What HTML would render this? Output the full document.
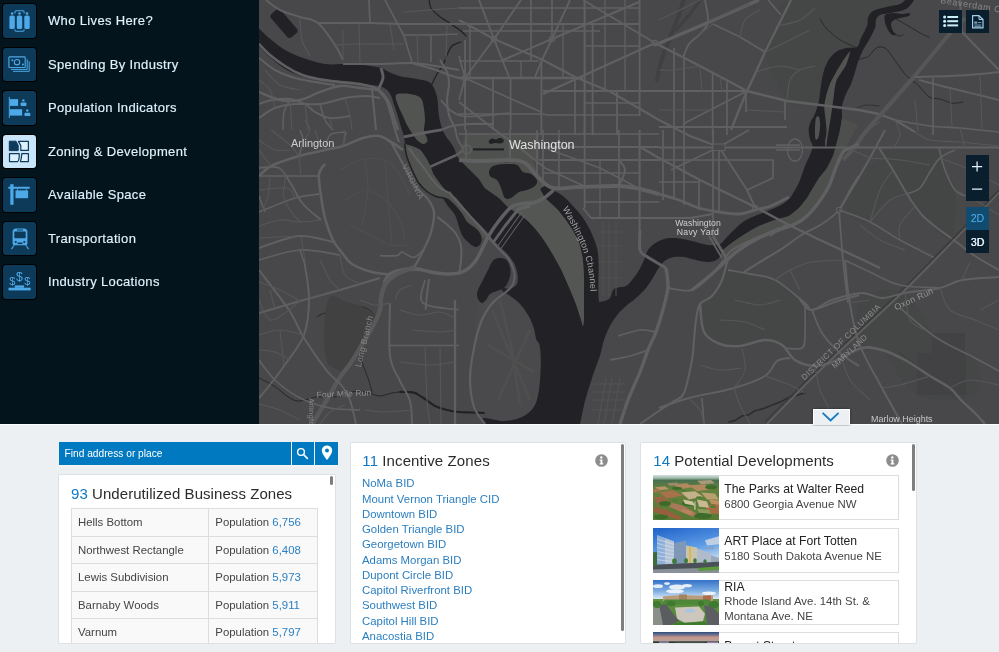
<!DOCTYPE html>
<html>
<head>
<meta charset="utf-8">
<title>Zoning &amp; Development</title>
<style>
html,body{margin:0;padding:0;}
body{width:999px;height:652px;overflow:hidden;background:#ecf0f3;font-family:"Liberation Sans",sans-serif;position:relative;}
#side{will-change:transform;position:absolute;left:0;top:0;width:259px;height:424px;background:#03141d;}
.mi{position:absolute;left:0;width:259px;height:33.5px;}
.mi .ib{position:absolute;left:3px;top:0;width:33px;height:33.5px;background:#0c3a58;border-radius:3px;box-shadow:0 0 0 1px #000;}
.mi.sel .ib{background:#c9e5fa;}
.mi .ib svg{position:absolute;left:0;top:0;}
.mi .lb{position:absolute;left:48px;top:0;height:34px;line-height:34px;font-size:13px;color:#e1f2fc;-webkit-text-stroke:0.15px #e1f2fc;letter-spacing:0.35px;white-space:nowrap;}
#map{position:absolute;left:259px;top:0;width:740px;height:424px;background:#48484a;overflow:hidden;}
#map svg.m{position:absolute;left:0;top:0;will-change:transform;}
.mb{position:absolute;background:#0a1f2d;will-change:transform;}
#bottom{will-change:transform;position:absolute;left:0;top:424px;width:999px;height:228px;background:#ecf0f3;box-shadow:inset 0 1px 0 #fff;}

#search{position:absolute;left:58.5px;top:18px;width:279.3px;height:22.8px;background:#0079c1;}
#search .t{position:absolute;left:6px;top:0;line-height:23px;font-size:10.2px;color:#fff;white-space:nowrap;}
#search .d{position:absolute;top:0;width:1px;height:25px;background:#ecf0f3;z-index:2;}
#search:after{content:"";position:absolute;left:0;top:22.8px;width:100%;height:2.2px;background:#f3f3f1;}
.h{position:absolute;font-size:15px;color:#2b2b2b;white-space:nowrap;line-height:18px;}
.h b{font-weight:normal;color:#0d79c4;}
table.z{position:absolute;left:12px;top:33px;border-collapse:collapse;font-size:11.4px;color:#444;}
table.z td{border:1px solid #ddd;background:#f9f9f9;height:27.5px;padding:0 0 0 6px;box-sizing:border-box;white-space:nowrap;}
table.z td b{font-weight:normal;color:#2b80c4;}
.sb{position:absolute;background:#7e7e7e;border-radius:1.5px;}
.lst{position:absolute;left:11px;top:33.4px;font-size:11.4px;line-height:15.23px;color:#2b7fc0;white-space:nowrap;}
.info{position:absolute;width:13px;height:13px;}
.dv{position:absolute;left:12px;width:245.8px;height:45px;border:1px solid #ddd;box-sizing:border-box;background:#fff;}
.dv .im{position:absolute;left:-1px;top:-1px;width:65.6px;height:45px;overflow:hidden;}
.dv .tt{position:absolute;left:70.3px;font-size:12.2px;color:#222;white-space:nowrap;line-height:15px;}
.dv .st{position:absolute;left:70.3px;font-size:11.4px;color:#444;white-space:nowrap;line-height:15px;}
.card{position:absolute;background:#fff;border:1px solid #dde1e4;border-radius:2px;box-sizing:border-box;overflow:hidden;}
</style>
</head>
<body>
<div id="side">
  <div class="mi" style="top:4px"><div class="ib"><svg width="33" height="34" viewBox="0 0 33 34"><g fill="#4ea9e8">
<circle cx="9.1" cy="9.5" r="1.3"/><rect x="6.4" y="11.5" width="5.4" height="13.6" rx="1.6"/>
<circle cx="16.5" cy="9.5" r="1.3"/><rect x="13.8" y="11.5" width="5.4" height="13.6" rx="1.6"/>
<circle cx="24" cy="9.5" r="1.3"/><rect x="21.3" y="11.5" width="5.4" height="13.6" rx="1.6"/></g>
<path d="M11.9 9.6 V8 Q11.9 6.8 13.1 6.8 H19.9 Q21.1 6.8 21.1 8 V9.6 M11.9 25.4 V26 Q11.9 27.2 13.1 27.2 H19.9 Q21.1 27.2 21.1 26 V25.4" fill="none" stroke="#4ea9e8" stroke-width="1.1"/></svg></div><div class="lb">Who Lives Here?</div></div>
  <div class="mi" style="top:47.6px"><div class="ib"><svg width="33" height="34" viewBox="0 0 33 34"><g fill="none" stroke="#4ea9e8" stroke-width="1.1">
<rect x="5.9" y="8.9" width="16.3" height="10.6" rx="0.8"/><circle cx="14" cy="14.2" r="2.7"/>
<path d="M8 21.4 H24.2 V11.2 M10 23.3 H26.2 V13.2" stroke-width="1"/></g>
<circle cx="9.3" cy="12.3" r="1" fill="#4ea9e8"/><circle cx="19.9" cy="16.6" r="1" fill="#4ea9e8"/></svg></div><div class="lb">Spending By Industry</div></div>
  <div class="mi" style="top:91px"><div class="ib"><svg width="33" height="34" viewBox="0 0 33 34"><g fill="#4ea9e8">
<rect x="5.8" y="5.9" width="1" height="21"/><rect x="6.8" y="8.1" width="8.3" height="6.8"/><rect x="6.8" y="18.2" width="12.4" height="6.4"/>
<circle cx="20.4" cy="9.4" r="1.2"/><rect x="17.6" y="11.6" width="5.8" height="3.3" rx="0.6"/>
<circle cx="24.3" cy="19.5" r="1.2"/><rect x="21.5" y="21.8" width="5.8" height="3.3" rx="0.6"/></g></svg></div><div class="lb">Population Indicators</div></div>
  <div class="mi sel" style="top:134.6px"><div class="ib"><svg width="33" height="34" viewBox="0 0 33 34">
<path d="M6.3 6.2 H13 L15.2 10.6 V15.6 H6.3 Z" fill="#0e3a5c" stroke="#0e3a5c" stroke-width="1"/>
<path d="M15.4 6.4 H25.4 V15.4 H17.8 V10.6 Z" fill="#dcf0fd" stroke="#0e3a5c" stroke-width="1.2" stroke-linejoin="round"/>
<path d="M6.5 18.6 H16.2 V22 Q16 25.4 14.6 26.6 H6.5 Z" fill="#dcf0fd" stroke="#0e3a5c" stroke-width="1.2" stroke-linejoin="round"/>
<path d="M18.8 18.6 H25.4 V26.6 H17.4 Q18.6 23 18.8 18.6 Z" fill="#dcf0fd" stroke="#0e3a5c" stroke-width="1.2" stroke-linejoin="round"/></svg></div><div class="lb">Zoning &amp; Development</div></div>
  <div class="mi" style="top:178px"><div class="ib"><svg width="33" height="34" viewBox="0 0 33 34"><g fill="#4ea9e8">
<rect x="7.3" y="6.2" width="3.2" height="20.6"/><path d="M5.4 8.8 H26 L27.4 9.7 L26 10.7 H5.4 Z"/>
<rect x="12.5" y="12.4" width="12.6" height="7.8"/><rect x="14" y="10.7" width="0.9" height="1.8"/><rect x="22.7" y="10.7" width="0.9" height="1.8"/></g></svg></div><div class="lb">Available Space</div></div>
  <div class="mi" style="top:221.5px"><div class="ib"><svg width="33" height="34" viewBox="0 0 33 34">
<path d="M9.6 10 Q9.6 6.5 13 6.5 H21 Q24.4 6.5 24.4 10 V21.5 Q24.4 23.2 22.7 23.2 H11.3 Q9.6 23.2 9.6 21.5 Z" fill="#4ea9e8"/>
<rect x="11.3" y="9.6" width="11.4" height="6.6" rx="0.8" fill="#0d3a58"/><rect x="14" y="7.5" width="6" height="1" fill="#0d3a58"/>
<circle cx="12.7" cy="20" r="1.1" fill="#0d3a58"/><circle cx="21.3" cy="20" r="1.1" fill="#0d3a58"/><rect x="14.5" y="20.5" width="5" height="1.6" fill="#0d3a58"/>
<path d="M11.2 23.2 L8.4 27.1 M22.8 23.2 L25.6 27.1" stroke="#4ea9e8" stroke-width="1.1" fill="none"/></svg></div><div class="lb">Transportation</div></div>
  <div class="mi" style="top:265px"><div class="ib"><svg width="33" height="34" viewBox="0 0 33 34"><g fill="#4ea9e8" font-family="Liberation Sans, sans-serif" text-anchor="middle">
<text x="9.2" y="19.9" font-size="11">$</text><text x="16.4" y="16.3" font-size="12.3">$</text><text x="24.4" y="19.9" font-size="11">$</text>
<rect x="5.5" y="22.7" width="22.1" height="2.7"/><rect x="11.8" y="20.4" width="9.3" height="2.4"/></g></svg></div><div class="lb">Industry Locations</div></div>
</div>
<div id="map">
  <svg class="m" width="740" height="424" viewBox="259 0 740 424">
  <path d="M478.0 300.0 C480.7 291.0 485.8 295.5 490.0 294.0 C494.2 292.5 498.0 289.3 503.0 291.0 C508.0 292.7 515.2 299.5 520.0 304.0 C524.8 308.5 528.7 311.2 532.0 318.0 C535.3 324.8 538.5 334.7 540.0 345.0 C541.5 355.3 541.8 369.8 541.0 380.0 C540.2 390.2 538.2 399.8 535.0 406.0 C531.8 412.2 527.2 414.5 522.0 417.0 C516.8 419.5 510.3 421.0 504.0 421.0 C497.7 421.0 489.0 419.3 484.0 417.0 C479.0 414.7 476.3 413.5 474.0 407.0 C471.7 400.5 470.0 387.8 470.0 378.0 C470.0 368.2 472.7 361.0 474.0 348.0 C475.3 335.0 475.3 309.0 478.0 300.0Z" fill="#4a4a4c"/>
<path d="M791.0 0.0 C811.3 -4.3 886.3 -1.8 900.0 0.0 C913.7 1.8 878.5 6.7 873.0 11.0 C867.5 15.3 869.7 20.0 867.0 26.0 C864.3 32.0 862.2 42.7 857.0 47.0 C851.8 51.3 841.7 47.5 836.0 52.0 C830.3 56.5 825.8 66.0 823.0 74.0 C820.2 82.0 822.8 95.0 819.0 100.0 C815.2 105.0 805.3 103.8 800.0 104.0 C794.7 104.2 792.8 109.7 787.0 101.0 C781.2 92.3 766.5 64.5 765.0 52.0 C763.5 39.5 773.7 34.7 778.0 26.0 C782.3 17.3 770.7 4.3 791.0 0.0Z" fill="#454746"/>
<path d="M885.0 150.0 C892.7 146.7 929.0 146.7 939.0 150.0 C949.0 153.3 942.3 163.3 945.0 170.0 C947.7 176.7 954.0 178.7 955.0 190.0 C956.0 201.3 956.3 233.7 951.0 238.0 C945.7 242.3 930.3 223.3 923.0 216.0 C915.7 208.7 912.0 201.7 907.0 194.0 C902.0 186.3 896.7 177.3 893.0 170.0 C889.3 162.7 877.3 153.3 885.0 150.0Z" fill="#444645"/>
<path d="M859.0 176.0 C864.8 169.3 874.3 161.0 880.0 160.0 C885.7 159.0 888.5 164.3 893.0 170.0 C897.5 175.7 907.5 189.0 907.0 194.0 C906.5 199.0 896.2 195.3 890.0 200.0 C883.8 204.7 876.7 219.5 870.0 222.0 C863.3 224.5 854.2 218.7 850.0 215.0 C845.8 211.3 843.5 206.5 845.0 200.0 C846.5 193.5 853.2 182.7 859.0 176.0Z" fill="#454746"/>
<path d="M700.0 304.0 C698.7 310.0 700.7 325.3 704.0 332.0 C707.3 338.7 713.7 341.3 720.0 344.0 C726.3 346.7 734.5 348.7 742.0 348.0 C749.5 347.3 758.3 340.5 765.0 340.0 C771.7 339.5 778.7 343.7 782.0 345.0 C785.3 346.3 781.7 347.5 785.0 348.0 C788.3 348.5 798.7 350.2 802.0 348.0 C805.3 345.8 804.5 342.5 805.0 335.0 C805.5 327.5 810.0 312.2 805.0 303.0 C800.0 293.8 784.2 284.8 775.0 280.0 C765.8 275.2 757.8 275.7 750.0 274.0 C742.2 272.3 734.3 266.3 728.0 270.0 C721.7 273.7 716.7 290.3 712.0 296.0 C707.3 301.7 701.3 298.0 700.0 304.0Z" fill="#454746"/>
<path d="M860.0 300.0 C867.2 290.8 892.2 286.7 905.0 293.0 C917.8 299.3 925.3 327.2 937.0 338.0 C948.7 348.8 968.7 348.5 975.0 358.0 C981.3 367.5 984.7 388.8 975.0 395.0 C965.3 401.2 932.5 402.5 917.0 395.0 C901.5 387.5 891.2 357.8 882.0 350.0 C872.8 342.2 865.7 356.3 862.0 348.0 C858.3 339.7 852.8 309.2 860.0 300.0Z" fill="#454646"/>
<path d="M255.0 26.0 C257.3 25.5 264.0 34.0 269.0 38.0 C274.0 42.0 279.3 46.7 285.0 50.0 C290.7 53.3 296.3 55.7 303.0 58.0 C309.7 60.3 318.3 63.0 325.0 64.0 C331.7 65.0 336.7 63.8 343.0 64.0 C349.3 64.2 356.7 64.3 363.0 65.0 C369.3 65.7 377.0 67.0 381.0 68.0 C385.0 69.0 384.0 69.7 387.0 71.0 C390.0 72.3 394.0 74.7 399.0 76.0 C404.0 77.3 412.0 78.0 417.0 79.0 C422.0 80.0 426.2 80.5 429.0 82.0 C431.8 83.5 432.8 85.8 434.0 88.0 C435.2 90.2 435.9 92.8 436.5 95.0 C437.1 97.2 437.4 98.2 437.7 101.0 C438.0 103.8 438.1 108.6 438.5 112.0 C438.9 115.4 439.3 118.7 440.0 121.6 C440.7 124.5 441.6 127.2 442.5 129.6 C443.4 132.0 444.4 133.8 445.7 136.0 C447.0 138.2 449.0 140.3 450.5 142.5 C452.0 144.7 453.4 146.8 454.5 149.0 C455.6 151.2 455.5 153.6 457.0 156.0 C458.5 158.4 460.9 160.8 463.3 163.3 C465.7 165.9 468.6 168.6 471.3 171.3 C474.0 174.0 477.0 176.5 479.3 179.3 C481.6 182.1 481.7 184.9 485.0 188.0 C488.3 191.1 495.0 194.7 499.0 198.0 C503.0 201.3 505.7 205.3 509.0 208.0 C512.3 210.7 515.8 211.8 519.0 214.0 C522.2 216.2 525.1 218.3 528.0 221.0 C530.9 223.7 533.6 226.8 536.3 230.0 C538.9 233.2 541.2 236.1 543.9 240.0 C546.6 243.9 549.5 248.8 552.3 253.6 C555.1 258.4 558.0 263.2 560.8 268.8 C563.6 274.4 566.7 281.5 569.2 287.4 C571.7 293.3 574.0 298.6 576.0 304.0 C578.0 309.4 579.8 315.8 581.0 319.5 C582.2 323.2 582.5 326.2 583.0 326.0 C583.5 325.8 583.8 322.8 584.0 318.0 C584.2 313.2 584.0 304.3 584.0 297.5 C584.0 290.7 584.2 283.5 584.0 277.0 C583.8 270.5 583.5 264.3 582.7 258.7 C581.9 253.1 581.0 248.3 579.3 243.5 C577.6 238.7 575.0 234.1 572.6 230.0 C570.2 225.9 567.6 222.5 565.0 219.0 C562.4 215.5 560.3 212.5 557.0 209.0 C553.7 205.5 547.8 201.3 545.0 198.0 C542.2 194.7 539.8 191.2 540.0 189.0 C540.2 186.8 543.8 184.8 546.0 185.0 C548.2 185.2 550.2 188.2 553.0 190.0 C555.8 191.8 559.7 193.3 563.0 196.0 C566.3 198.7 569.7 202.3 573.0 206.0 C576.3 209.7 580.0 213.7 583.0 218.0 C586.0 222.3 588.7 227.0 591.0 232.0 C593.3 237.0 595.8 243.0 597.0 248.0 C598.2 253.0 598.2 253.7 598.5 262.0 C598.8 270.3 598.0 291.4 598.6 298.0 C599.2 304.6 600.1 301.5 602.0 301.5 C603.9 301.5 608.0 300.1 610.0 298.0 C612.0 295.9 611.3 291.0 614.0 289.0 C616.7 287.0 623.0 287.5 626.0 286.0 C629.0 284.5 630.0 282.3 632.0 280.0 C634.0 277.7 636.0 275.3 638.0 272.0 C640.0 268.7 642.3 263.7 644.0 260.0 C645.7 256.3 646.3 252.7 648.0 250.0 C649.7 247.3 651.3 245.8 654.0 244.0 C656.7 242.2 660.3 240.0 664.0 239.0 C667.7 238.0 671.3 237.7 676.0 238.0 C680.7 238.3 686.7 239.8 692.0 241.0 C697.3 242.2 703.3 244.5 708.0 245.0 C712.7 245.5 717.0 245.2 720.0 244.0 C723.0 242.8 723.3 240.7 726.0 238.0 C728.7 235.3 732.7 231.0 736.0 228.0 C739.3 225.0 742.0 222.3 746.0 220.0 C750.0 217.7 754.5 216.3 760.0 214.0 C765.5 211.7 774.2 208.5 779.0 206.0 C783.8 203.5 786.3 201.7 789.0 199.0 C791.7 196.3 793.2 193.0 795.0 190.0 C796.8 187.0 797.9 185.1 799.6 181.0 C801.3 176.9 803.3 170.0 805.0 165.7 C806.7 161.4 808.7 158.3 810.0 155.0 C811.3 151.7 812.6 148.6 812.6 146.0 C812.6 143.4 810.6 142.4 810.0 139.6 C809.4 136.8 808.5 132.1 808.7 129.0 C808.9 125.9 810.1 123.2 811.0 121.0 C811.9 118.8 813.0 118.2 814.0 116.0 C815.0 113.8 816.2 110.6 817.0 108.0 C817.8 105.4 818.4 103.4 819.0 100.4 C819.6 97.4 819.7 94.4 820.4 90.0 C821.1 85.6 821.7 78.8 823.0 74.0 C824.3 69.2 825.8 64.7 828.0 61.0 C830.2 57.3 833.0 54.2 836.0 52.0 C839.0 49.8 842.5 48.8 846.0 48.0 C849.5 47.2 854.5 48.7 857.0 47.0 C859.5 45.3 859.3 41.5 861.0 38.0 C862.7 34.5 865.8 29.3 867.0 26.0 C868.2 22.7 867.0 20.5 868.0 18.0 C869.0 15.5 870.0 12.8 873.0 11.0 C876.0 9.2 881.5 8.2 886.0 7.0 C890.5 5.8 896.3 5.5 900.0 4.0 C903.7 2.5 905.5 -1.0 908.0 -2.0 C910.5 -3.0 915.3 -3.8 915.0 -2.0 C914.7 -0.2 910.2 6.5 906.0 9.0 C901.8 11.5 894.3 12.0 890.0 13.0 C885.7 14.0 882.3 13.8 880.0 15.0 C877.7 16.2 876.8 17.8 876.0 20.0 C875.2 22.2 876.2 24.7 875.0 28.0 C873.8 31.3 871.0 36.3 869.0 40.0 C867.0 43.7 864.8 46.3 863.0 50.0 C861.2 53.7 859.3 58.3 858.0 62.0 C856.7 65.7 856.2 68.3 855.0 72.0 C853.8 75.7 852.5 80.3 851.0 84.0 C849.5 87.7 847.5 90.3 846.0 94.0 C844.5 97.7 842.7 102.0 842.0 106.0 C841.3 110.0 842.3 114.0 842.0 118.0 C841.7 122.0 840.8 126.0 840.0 130.0 C839.2 134.0 838.2 137.7 837.0 142.0 C835.8 146.3 834.7 151.7 833.0 156.0 C831.3 160.3 829.3 164.3 827.0 168.0 C824.7 171.7 821.3 174.7 819.0 178.0 C816.7 181.3 815.0 184.7 813.0 188.0 C811.0 191.3 809.3 194.7 807.0 198.0 C804.7 201.3 802.0 205.0 799.0 208.0 C796.0 211.0 793.0 214.0 789.0 216.0 C785.0 218.0 780.0 218.3 775.0 220.0 C770.0 221.7 764.0 223.7 759.0 226.0 C754.0 228.3 749.3 231.3 745.0 234.0 C740.7 236.7 736.7 239.3 733.0 242.0 C729.3 244.7 725.5 247.2 723.0 250.0 C720.5 252.8 720.5 257.0 718.0 259.0 C715.5 261.0 711.7 261.8 708.0 262.0 C704.3 262.2 700.0 260.8 696.0 260.0 C692.0 259.2 687.7 257.5 684.0 257.0 C680.3 256.5 677.0 256.5 674.0 257.0 C671.0 257.5 668.3 258.5 666.0 260.0 C663.7 261.5 662.0 263.3 660.0 266.0 C658.0 268.7 656.3 272.3 654.0 276.0 C651.7 279.7 649.0 284.3 646.0 288.0 C643.0 291.7 639.3 295.0 636.0 298.0 C632.7 301.0 629.0 303.3 626.0 306.0 C623.0 308.7 620.7 310.7 618.0 314.0 C615.3 317.3 612.3 321.7 610.0 326.0 C607.7 330.3 605.7 335.1 604.0 340.0 C602.3 344.9 602.0 349.3 600.0 355.6 C598.0 361.9 594.5 370.4 592.0 378.0 C589.5 385.6 587.0 393.3 585.0 401.0 C583.0 408.7 581.2 419.2 580.0 424.0 C578.8 428.8 594.7 429.0 578.0 430.0 C561.3 431.0 495.8 431.0 480.0 430.0 C464.2 429.0 482.3 426.0 483.0 424.0 C483.7 422.0 480.5 418.5 484.0 418.0 C487.5 417.5 497.7 421.2 504.0 421.0 C510.3 420.8 516.9 419.5 522.0 417.0 C527.1 414.5 531.6 411.2 534.5 406.0 C537.4 400.8 538.5 393.7 539.5 386.0 C540.5 378.3 540.8 366.8 540.8 360.0 C540.8 353.2 540.2 348.4 539.5 345.0 C538.8 341.6 537.2 342.3 536.3 339.5 C535.3 336.7 535.1 331.9 533.8 328.0 C532.5 324.1 531.0 320.0 528.7 316.0 C526.4 312.0 523.1 307.4 520.0 304.0 C516.9 300.6 512.8 297.9 510.0 295.8 C507.2 293.7 504.2 292.8 503.0 291.5 C501.8 290.2 501.7 288.8 503.0 288.3 C504.3 287.8 508.7 289.2 511.0 288.5 C513.3 287.8 515.8 286.1 516.9 284.0 C518.0 281.9 518.0 278.7 517.7 275.6 C517.4 272.5 516.2 268.0 515.2 265.4 C514.2 262.8 513.3 261.9 512.0 260.0 C510.7 258.1 509.2 256.1 507.3 254.0 C505.4 251.9 503.2 250.0 500.8 247.6 C498.4 245.2 495.2 242.3 492.8 239.6 C490.4 236.9 488.5 234.0 486.4 231.6 C484.3 229.2 482.4 227.4 480.0 225.0 C477.6 222.6 474.7 219.9 472.0 217.0 C469.3 214.1 466.7 210.8 464.0 207.6 C461.3 204.4 458.3 200.2 456.0 198.0 C453.7 195.8 451.5 195.3 450.0 194.2 C448.5 193.1 448.3 192.6 447.0 191.4 C445.7 190.2 443.9 188.6 442.4 186.8 C440.9 185.0 439.3 182.6 437.8 180.4 C436.3 178.2 434.4 176.2 433.2 173.9 C432.0 171.6 431.6 169.1 430.5 166.6 C429.4 164.1 428.5 162.0 426.8 159.2 C425.1 156.4 422.7 152.1 420.4 150.0 C418.1 147.9 415.5 147.5 413.0 146.5 C410.5 145.5 407.1 145.8 405.6 144.0 C404.1 142.2 404.8 138.9 404.0 136.0 C403.2 133.1 401.9 129.9 400.8 126.4 C399.7 122.9 398.7 118.7 397.6 115.2 C396.5 111.7 395.5 108.8 394.4 105.6 C393.3 102.4 392.5 98.7 391.2 96.0 C389.9 93.3 388.4 91.3 386.4 89.6 C384.4 87.9 382.9 86.9 379.0 86.0 C375.1 85.1 368.7 84.8 363.0 84.0 C357.3 83.2 351.3 81.7 345.0 81.0 C338.7 80.3 331.7 80.7 325.0 80.0 C318.3 79.3 311.3 78.7 305.0 77.0 C298.7 75.3 292.7 73.2 287.0 70.0 C281.3 66.8 276.3 62.8 271.0 58.0 C265.7 53.2 257.7 46.3 255.0 41.0 C252.3 35.7 252.7 26.5 255.0 26.0Z" fill="#222226"/>
<path d="M509.0 208.0 L519.0 214.0 L528.0 221.0 L536.3 230.0 L543.9 240.0 L552.3 253.6 L560.8 268.8 L569.2 287.4 L576.0 304.0 L581.0 319.5 L583.0 326.0 L584.0 318.0 L584.0 297.5 L584.0 277.0 L582.7 258.7 L579.3 243.5 L572.6 230.0 L565.0 219.0 L557.0 209.0 L545.0 198.0 L540.0 189.0 L530.0 195.0 L519.0 202.0Z" fill="#545654"/>
<path d="M457.0 156.0 L463.0 163.0 L471.0 171.0 L479.0 179.0 L485.0 188.0 L499.0 198.0 L509.0 208.0 L519.0 202.0 L543.0 198.0 L540.0 189.0 L546.0 185.0 L539.0 178.0 L533.0 160.0 L539.0 160.0 L539.0 134.0 L466.0 134.0 L462.0 146.0Z" fill="#4f514f"/>
<path d="M405.6 144.0 L413.0 146.5 L420.4 150.0 L426.8 159.2 L430.5 166.6 L433.2 173.9 L437.8 180.4 L442.4 186.8 L447.0 191.4 L450.0 194.2 L456.0 198.0 L464.0 207.6 L472.0 217.0 L480.0 225.0 L486.4 231.6 L492.8 239.6 L481.6 238.0 L477.6 230.0 L467.2 222.0 L462.4 214.0 L456.0 206.0 L448.0 198.8 L443.2 198.0 L436.0 196.0 L427.0 191.0 L418.4 182.5 L412.0 169.7 L406.4 155.0Z" fill="#505250"/>
<path d="M842.0 118.0 L840.0 130.0 L837.0 142.0 L833.0 156.0 L827.0 168.0 L819.0 178.0 L813.0 188.0 L807.0 198.0 L799.0 208.0 L789.0 216.0 L775.0 220.0 L759.0 226.0 L745.0 234.0 L733.0 242.0 L723.0 250.0 L727.0 260.0 L739.0 250.0 L759.0 238.0 L779.0 230.0 L795.0 224.0 L807.0 216.0 L819.0 202.0 L829.0 186.0 L835.0 170.0 L843.0 152.0 L850.0 140.0 L858.0 125.0Z" fill="#4d4f4d"/>
<path d="M850.0 52.0 C849.9 53.5 848.0 60.5 846.5 64.0 C845.0 67.5 842.8 70.0 841.0 73.0 C839.2 76.0 837.2 77.8 836.0 82.0 C834.8 86.2 834.3 92.3 833.5 98.0 C832.7 103.7 831.9 110.0 831.0 116.0 C830.1 122.0 828.8 128.8 828.0 134.0 C827.2 139.2 826.5 145.7 826.0 147.0 C825.5 148.3 824.9 144.6 825.0 142.0 C825.1 139.4 826.4 135.6 826.5 131.7 C826.6 127.8 825.9 122.7 825.5 118.7 C825.1 114.8 824.3 111.5 824.3 108.0 C824.3 104.5 824.8 101.7 825.7 97.8 C826.6 93.9 828.1 88.7 829.6 84.8 C831.1 80.9 832.9 77.9 834.8 74.4 C836.7 70.9 839.0 67.2 841.0 64.0 C843.0 60.8 845.5 57.0 847.0 55.0 C848.5 53.0 850.1 50.5 850.0 52.0Z" fill="#525452"/>
<path d="M816.0 118.0 C816.7 116.2 818.3 115.7 819.0 117.0 C819.7 118.3 820.1 122.7 820.0 126.0 C819.9 129.3 819.2 134.8 818.5 137.0 C817.8 139.2 816.1 140.5 815.5 139.0 C814.9 137.5 814.9 131.5 815.0 128.0 C815.1 124.5 815.3 119.8 816.0 118.0Z" fill="#525452"/>
<path d="M493.0 260.5 C495.0 258.5 497.7 258.0 500.0 258.0 C502.3 258.0 505.2 258.5 507.0 260.5 C508.8 262.5 510.2 266.8 510.5 270.0 C510.8 273.2 510.1 277.0 509.0 280.0 C507.9 283.0 506.0 286.2 504.0 288.0 C502.0 289.8 499.3 290.0 497.0 291.0 C494.7 292.0 491.8 292.5 490.0 294.0 C488.2 295.5 487.3 298.5 486.0 300.0 C484.7 301.5 483.2 303.0 482.0 303.0 C480.8 303.0 479.3 301.5 478.5 300.0 C477.7 298.5 477.0 295.8 477.0 294.0 C477.0 292.2 477.4 291.3 478.4 289.0 C479.4 286.7 481.4 283.2 483.0 280.0 C484.6 276.8 486.3 273.2 488.0 270.0 C489.7 266.8 491.0 262.5 493.0 260.5Z" fill="#222226"/>
<path d="M443.2 198.0 C443.2 196.8 445.9 197.5 448.0 198.8 C450.1 200.1 453.6 203.5 456.0 206.0 C458.4 208.5 460.5 211.3 462.4 214.0 C464.3 216.7 464.7 219.3 467.2 222.0 C469.7 224.7 475.2 227.3 477.6 230.0 C480.0 232.7 481.2 235.6 481.6 238.0 C482.0 240.4 480.9 243.0 480.0 244.5 C479.1 246.0 477.3 246.9 476.0 247.0 C474.7 247.1 474.0 246.8 472.0 245.3 C470.0 243.8 466.0 240.6 464.0 238.0 C462.0 235.4 461.1 232.7 460.0 230.0 C458.9 227.3 458.5 224.7 457.6 222.0 C456.7 219.3 456.0 216.7 454.4 214.0 C452.8 211.3 449.9 208.7 448.0 206.0 C446.1 203.3 443.2 199.2 443.2 198.0Z" fill="#222226"/>
<path d="M396.0 95.0 C397.1 93.2 400.8 93.5 404.0 93.5 C407.2 93.5 412.1 94.1 415.0 95.0 C417.9 95.9 420.0 96.7 421.5 99.0 C423.0 101.3 423.4 105.5 424.0 109.0 C424.6 112.5 425.0 116.3 425.0 120.0 C425.0 123.7 423.7 128.0 424.0 131.0 C424.3 134.0 426.5 136.2 427.0 138.0 C427.5 139.8 427.7 141.0 427.0 142.0 C426.3 143.0 424.7 144.3 423.0 144.0 C421.3 143.7 418.8 141.8 417.0 140.0 C415.2 138.2 413.7 135.5 412.0 133.0 C410.3 130.5 408.6 128.0 407.0 125.0 C405.4 122.0 404.1 118.5 402.5 115.0 C400.9 111.5 398.6 107.3 397.5 104.0 C396.4 100.7 394.9 96.8 396.0 95.0Z" fill="#525452"/>
<path d="M489.0 172.0 C489.3 170.2 490.3 167.3 493.0 166.0 C495.7 164.7 501.0 164.2 505.0 164.0 C509.0 163.8 514.0 163.7 517.0 165.0 C520.0 166.3 520.7 170.5 523.0 172.0 C525.3 173.5 528.7 172.7 531.0 174.0 C533.3 175.3 536.3 178.0 537.0 180.0 C537.7 182.0 536.7 184.3 535.0 186.0 C533.3 187.7 529.7 189.0 527.0 190.0 C524.3 191.0 521.7 190.7 519.0 192.0 C516.3 193.3 513.3 197.0 511.0 198.0 C508.7 199.0 506.7 199.7 505.0 198.0 C503.3 196.3 502.3 191.0 501.0 188.0 C499.7 185.0 498.7 181.8 497.0 180.0 C495.3 178.2 492.3 178.3 491.0 177.0 C489.7 175.7 488.7 173.8 489.0 172.0Z" fill="#222226"/>
<path d="M501.0 159.5 C501.2 158.8 503.3 158.2 505.0 158.0 C506.7 157.8 509.5 158.1 511.0 158.5 C512.5 158.9 514.2 159.9 514.0 160.5 C513.8 161.1 511.7 161.8 510.0 162.0 C508.3 162.2 505.5 162.4 504.0 162.0 C502.5 161.6 500.8 160.2 501.0 159.5Z" fill="#222226"/>
<path d="M489.0 140.5 C489.5 139.8 490.8 138.7 492.0 138.5 C493.2 138.3 494.8 139.6 496.0 139.5 C497.2 139.4 497.8 138.1 499.0 138.0 C500.2 137.9 502.2 138.3 503.0 139.0 C503.8 139.7 504.0 141.2 503.5 142.0 C503.0 142.8 501.4 143.3 500.0 143.5 C498.6 143.7 496.5 142.9 495.0 143.0 C493.5 143.1 492.0 144.1 491.0 144.0 C490.0 143.9 489.3 143.1 489.0 142.5 C488.7 141.9 488.5 141.2 489.0 140.5Z" fill="#222226"/>
<rect x="473" y="148.3" width="31" height="2.2" fill="#222226"/>
<rect x="-15.5" y="-6.3" width="31" height="12.6" rx="3.5" fill="#222226" transform="translate(284,23.5) rotate(49)"/>
<path d="M885.0 15.0 C886.3 13.5 890.2 13.2 893.0 13.0 C895.8 12.8 899.3 14.0 902.0 14.0 C904.7 14.0 907.8 12.7 909.0 13.0 C910.2 13.3 910.5 15.2 909.0 16.0 C907.5 16.8 902.5 17.3 900.0 18.0 C897.5 18.7 895.5 19.0 894.0 20.0 C892.5 21.0 891.2 22.2 891.0 24.0 C890.8 25.8 892.2 29.2 893.0 31.0 C893.8 32.8 896.3 34.5 896.0 35.0 C895.7 35.5 892.5 35.2 891.0 34.0 C889.5 32.8 888.0 30.0 887.0 28.0 C886.0 26.0 885.3 24.2 885.0 22.0 C884.7 19.8 883.7 16.5 885.0 15.0Z" fill="#222226"/>
<path d="M896.0 19.0 C897.5 19.8 901.8 22.2 905.0 24.0 C908.2 25.8 912.2 28.3 915.0 30.0 C917.8 31.7 919.7 32.8 922.0 34.0 C924.3 35.2 927.8 36.5 929.0 37.0" fill="none" stroke="#222226" stroke-width="0.8" stroke-linecap="round"/>
<path d="M894.0 33.0 C894.8 33.5 897.5 35.7 899.0 36.0 C900.5 36.3 902.3 35.2 903.0 35.0" fill="none" stroke="#222226" stroke-width="0.8" stroke-linecap="round"/>
<path d="M820.0 19.0 C821.0 20.5 823.3 25.0 826.0 28.0 C828.7 31.0 832.7 34.5 836.0 37.0 C839.3 39.5 842.5 41.2 846.0 43.0 C849.5 44.8 855.2 47.2 857.0 48.0" fill="none" stroke="#222226" stroke-width="0.8" stroke-linecap="round"/>
<path d="M857.0 60.0 C858.2 59.7 862.0 58.7 864.0 58.0 C866.0 57.3 867.3 57.3 869.0 56.0 C870.7 54.7 872.3 51.5 874.0 50.0 C875.7 48.5 877.2 47.3 879.0 47.0 C880.8 46.7 883.3 47.2 885.0 48.0 C886.7 48.8 887.5 50.2 889.0 52.0 C890.5 53.8 892.3 56.7 894.0 59.0 C895.7 61.3 897.3 63.7 899.0 66.0 C900.7 68.3 902.3 71.0 904.0 73.0 C905.7 75.0 907.3 76.5 909.0 78.0 C910.7 79.5 912.3 80.7 914.0 82.0 C915.7 83.3 917.2 84.2 919.0 86.0 C920.8 87.8 923.0 91.0 925.0 93.0 C927.0 95.0 928.5 97.0 931.0 98.0 C933.5 99.0 936.7 98.2 940.0 99.0 C943.3 99.8 948.2 102.3 951.0 103.0 C953.8 103.7 955.0 103.2 957.0 103.0 C959.0 102.8 962.0 102.2 963.0 102.0" fill="none" stroke="#222226" stroke-width="0.8" stroke-linecap="round"/>
<path d="M857.0 108.0 C858.5 107.5 862.3 105.3 866.0 105.0 C869.7 104.7 876.8 105.8 879.0 106.0" fill="none" stroke="#222226" stroke-width="0.6" stroke-linecap="round"/>
<path d="M429.0 -2.0 C429.3 -0.3 429.3 5.0 431.0 8.0 C432.7 11.0 435.7 13.3 439.0 16.0 C442.3 18.7 447.3 21.5 451.0 24.0 C454.7 26.5 458.5 29.0 461.0 31.0 C463.5 33.0 465.2 35.2 466.0 36.0" fill="none" stroke="#222226" stroke-width="1.3" stroke-linecap="round"/>
<path d="M461.0 42.0 C459.5 42.7 454.3 43.8 452.0 46.0 C449.7 48.2 448.5 51.8 447.0 55.0 C445.5 58.2 444.7 61.8 443.0 65.0 C441.3 68.2 438.8 70.8 437.0 74.0 C435.2 77.2 432.8 82.3 432.0 84.0" fill="none" stroke="#222226" stroke-width="1.3" stroke-linecap="round"/>
<path d="M404.8 144.0 C405.1 145.8 405.2 150.7 406.4 155.0 C407.6 159.3 410.0 165.1 412.0 169.7 C414.0 174.3 415.9 178.9 418.4 182.5 C420.9 186.1 424.1 189.2 427.0 191.5 C429.9 193.8 433.2 195.4 436.0 196.5 C438.8 197.6 442.7 197.8 444.0 198.0" fill="none" stroke="#222226" stroke-width="1.5" stroke-linecap="round"/>
<path d="M259.0 378.0 C261.5 379.3 269.3 383.0 274.0 386.0 C278.7 389.0 283.2 393.5 287.0 396.0 C290.8 398.5 293.5 400.5 297.0 401.0 C300.5 401.5 304.7 399.7 308.0 399.0 C311.3 398.3 313.3 397.3 317.0 397.0 C320.7 396.7 325.8 397.2 330.0 397.0 C334.2 396.8 338.3 396.8 342.0 396.0 C345.7 395.2 349.0 392.8 352.0 392.0 C355.0 391.2 356.7 390.7 360.0 391.0 C363.3 391.3 368.7 393.2 372.0 394.0 C375.3 394.8 376.7 396.2 380.0 396.0 C383.3 395.8 388.7 393.7 392.0 393.0 C395.3 392.3 398.7 392.2 400.0 392.0" fill="none" stroke="#222226" stroke-width="0.9" stroke-linecap="round"/>
<path d="M400.0 392.0 C401.3 392.0 405.5 391.8 408.0 392.0 C410.5 392.2 412.2 391.8 415.0 393.0 C417.8 394.2 421.7 396.8 425.0 399.0 C428.3 401.2 431.3 404.2 435.0 406.0 C438.7 407.8 443.0 409.0 447.0 410.0 C451.0 411.0 454.8 411.6 459.0 412.0 C463.2 412.4 467.8 412.3 472.0 412.5 C476.2 412.7 482.0 412.9 484.0 413.0" fill="none" stroke="#222226" stroke-width="2.2" stroke-linecap="round"/>
<path d="M317.0 316.6 C318.3 316.0 322.1 314.1 325.0 313.0 C327.9 311.9 330.8 311.0 334.5 310.0 C338.2 309.0 342.8 307.6 347.0 307.0 C351.2 306.4 355.8 306.0 359.6 306.5 C363.4 307.0 366.8 308.1 369.7 310.0 C372.6 311.9 375.8 316.7 377.0 318.0" fill="none" stroke="#222226" stroke-width="0.8" stroke-linecap="round"/>
<path d="M360.0 348.0 C360.3 350.3 360.7 357.0 362.0 362.0 C363.3 367.0 366.3 373.0 368.0 378.0 C369.7 383.0 371.3 389.7 372.0 392.0" fill="none" stroke="#222226" stroke-width="0.8" stroke-linecap="round"/>
<path d="M729.0 422.0 C730.2 421.7 733.8 421.0 736.0 420.0 C738.2 419.0 740.0 416.8 742.0 416.0 C744.0 415.2 745.9 415.8 748.0 415.0 C750.1 414.2 752.3 412.0 754.6 411.0 C756.9 410.0 759.5 409.8 762.0 409.0 C764.5 408.2 766.7 407.2 769.7 406.0 C772.7 404.8 776.6 403.5 780.0 402.0 C783.4 400.5 787.0 398.2 790.0 397.0 C793.0 395.8 795.5 395.7 798.0 395.0 C800.5 394.3 803.8 393.3 805.0 393.0" fill="none" stroke="#2c2c2e" stroke-width="1.5" stroke-linecap="round"/>
<path d="M899.0 352.0 C901.2 353.7 906.8 357.7 912.0 362.0 C917.2 366.3 924.5 373.3 930.0 378.0 C935.5 382.7 940.8 386.7 945.0 390.0 C949.2 393.3 953.3 396.7 955.0 398.0" fill="none" stroke="#3a3a3a" stroke-width="0.7" stroke-linecap="round"/>
<path d="M329.0 298.0 C332.8 292.5 341.0 300.3 347.0 302.0 C353.0 303.7 360.0 305.3 365.0 308.0 C370.0 310.7 376.5 313.7 377.0 318.0 C377.5 322.3 370.8 329.0 368.0 334.0 C365.2 339.0 362.8 343.7 360.0 348.0 C357.2 352.3 354.0 356.2 351.0 360.0 C348.0 363.8 345.0 369.8 342.0 371.0 C339.0 372.2 335.5 368.7 333.0 367.0 C330.5 365.3 328.5 366.3 327.0 361.0 C325.5 355.7 323.7 345.5 324.0 335.0 C324.3 324.5 325.2 303.5 329.0 298.0Z" fill="#414141"/>
<path d="M932.0 333.0 L965.0 333.0 L965.0 353.0 L966.0 353.0 L966.0 395.0 L917.0 395.0 L917.0 353.0 L932.0 353.0Z" fill="#424244"/>
<path d="M684.0 -2.0 C683.3 0.3 681.8 6.7 680.0 12.0 C678.2 17.3 675.3 24.0 673.0 30.0 C670.7 36.0 668.0 42.7 666.0 48.0 C664.0 53.3 662.5 56.7 661.0 62.0 C659.5 67.3 657.7 77.0 657.0 80.0" fill="none" stroke="#404040" stroke-width="4" stroke-linecap="round"/>
<path d="M700.0 0.0 C698.3 2.3 694.0 9.0 690.0 14.0 C686.0 19.0 678.3 27.3 676.0 30.0" fill="none" stroke="#404040" stroke-width="3" stroke-linecap="round"/>
<g><path d="M259.0 44.0 C260.8 45.8 265.7 51.3 270.0 55.0 C274.3 58.7 280.0 62.8 285.0 66.0 C290.0 69.2 294.5 71.8 300.0 74.0 C305.5 76.2 311.3 77.7 318.0 79.0 C324.7 80.3 333.0 81.2 340.0 82.0 C347.0 82.8 354.2 83.0 360.0 84.0 C365.8 85.0 371.0 86.2 375.0 88.0 C379.0 89.8 381.5 92.2 384.0 95.0 C386.5 97.8 388.3 101.2 390.0 105.0 C391.7 108.8 392.7 113.8 394.0 118.0 C395.3 122.2 397.3 128.0 398.0 130.0" fill="none" stroke="#606062" stroke-width="2.6" stroke-linejoin="round"/>
<path d="M259.0 58.0 C261.7 60.0 269.0 66.7 275.0 70.0 C281.0 73.3 288.3 76.0 295.0 78.0 C301.7 80.0 308.3 80.8 315.0 82.0 C321.7 83.2 331.7 84.5 335.0 85.0" fill="none" stroke="#606062" stroke-width="2.08" stroke-linejoin="round"/>
<path d="M266.0 0.0 C268.3 1.7 274.3 7.2 280.0 10.0 C285.7 12.8 293.7 14.8 300.0 17.0 C306.3 19.2 312.2 18.3 318.0 23.0 C323.8 27.7 330.8 38.8 335.0 45.0 C339.2 51.2 341.7 57.5 343.0 60.0" fill="none" stroke="#606062" stroke-width="1.95" stroke-linejoin="round"/>
<path d="M318.0 23.0 L370.0 23.0 L400.0 24.0 L459.0 24.0" fill="none" stroke="#606062" stroke-width="1.95" stroke-linejoin="round"/>
<path d="M369.0 0.0 L370.0 23.0" fill="none" stroke="#606062" stroke-width="1.69" stroke-linejoin="round"/>
<path d="M385.0 0.0 L404.0 36.0 L412.0 62.0" fill="none" stroke="#606062" stroke-width="1.69" stroke-linejoin="round"/>
<path d="M404.0 35.0 L431.0 35.0 L458.0 34.0" fill="none" stroke="#606062" stroke-width="1.69" stroke-linejoin="round"/>
<path d="M431.0 35.0 L431.0 62.0" fill="none" stroke="#606062" stroke-width="1.56" stroke-linejoin="round"/>
<path d="M343.0 64.0 C349.2 64.0 368.5 64.2 380.0 64.0 C391.5 63.8 402.7 62.7 412.0 63.0 C421.3 63.3 428.2 64.8 436.0 66.0 C443.8 67.2 455.2 69.3 459.0 70.0" fill="none" stroke="#606062" stroke-width="2.08" stroke-linejoin="round"/>
<path d="M412.0 63.0 C416.0 64.2 429.3 67.8 436.0 70.0 C442.7 72.2 448.2 74.7 452.0 76.0 C455.8 77.3 457.8 77.7 459.0 78.0" fill="none" stroke="#606062" stroke-width="2.08" stroke-linejoin="round"/>
<path d="M381.0 68.0 C381.3 69.7 383.5 74.3 383.0 78.0 C382.5 81.7 378.8 88.0 378.0 90.0" fill="none" stroke="#606062" stroke-width="2.86" stroke-linejoin="round"/>
<path d="M259.0 92.0 C262.5 93.3 273.2 98.7 280.0 100.0 C286.8 101.3 293.3 101.3 300.0 100.0 C306.7 98.7 313.3 94.3 320.0 92.0 C326.7 89.7 333.3 86.7 340.0 86.0 C346.7 85.3 353.7 87.3 360.0 88.0 C366.3 88.7 375.0 89.7 378.0 90.0" fill="none" stroke="#606062" stroke-width="2.34" stroke-linejoin="round"/>
<path d="M259.0 118.0 C261.7 116.3 269.0 110.3 275.0 108.0 C281.0 105.7 287.5 104.7 295.0 104.0 C302.5 103.3 311.7 105.0 320.0 104.0 C328.3 103.0 337.5 99.3 345.0 98.0 C352.5 96.7 359.2 96.0 365.0 96.0 C370.8 96.0 377.5 97.7 380.0 98.0" fill="none" stroke="#606062" stroke-width="2.08" stroke-linejoin="round"/>
<path d="M259.0 104.0 C261.2 103.3 266.8 100.8 272.0 100.0 C277.2 99.2 284.5 98.3 290.0 99.0 C295.5 99.7 300.8 101.8 305.0 104.0 C309.2 106.2 310.8 109.7 315.0 112.0 C319.2 114.3 324.2 117.3 330.0 118.0 C335.8 118.7 346.7 116.3 350.0 116.0" fill="none" stroke="#606062" stroke-width="1.82" stroke-linejoin="round"/>
<path d="M283.0 130.0 C283.2 127.0 282.8 117.0 284.0 112.0 C285.2 107.0 289.0 102.0 290.0 100.0" fill="none" stroke="#606062" stroke-width="1.56" stroke-linejoin="round"/>
<path d="M320.0 104.0 C320.8 106.7 322.8 115.7 325.0 120.0 C327.2 124.3 331.7 128.3 333.0 130.0" fill="none" stroke="#606062" stroke-width="1.56" stroke-linejoin="round"/>
<path d="M372.0 88.0 C372.3 91.7 373.3 103.0 374.0 110.0 C374.7 117.0 375.7 126.7 376.0 130.0" fill="none" stroke="#606062" stroke-width="2.08" stroke-linejoin="round"/>
<path d="M378.0 90.0 C379.3 91.7 383.8 95.8 386.0 100.0 C388.2 104.2 389.5 110.0 391.0 115.0 C392.5 120.0 393.7 125.5 395.0 130.0 C396.3 134.5 398.3 140.0 399.0 142.0" fill="none" stroke="#606062" stroke-width="2.08" stroke-linejoin="round"/>
<path d="M440.0 60.0 C441.2 62.0 445.5 68.0 447.0 72.0 C448.5 76.0 449.0 79.3 449.0 84.0 C449.0 88.7 447.0 94.8 447.0 100.0 C447.0 105.2 447.7 110.3 449.0 115.0 C450.3 119.7 454.0 125.8 455.0 128.0" fill="none" stroke="#606062" stroke-width="2.08" stroke-linejoin="round"/>
<path d="M459.0 24.0 L640.0 24.0" fill="none" stroke="#606062" stroke-width="2.08" stroke-linejoin="round"/>
<path d="M463.0 31.0 L600.0 31.0" fill="none" stroke="#606062" stroke-width="1.69" stroke-linejoin="round"/>
<path d="M459.0 61.0 L539.0 61.0" fill="none" stroke="#606062" stroke-width="1.69" stroke-linejoin="round"/>
<path d="M459.0 78.0 L583.0 78.0" fill="none" stroke="#606062" stroke-width="2.6" stroke-linejoin="round"/>
<path d="M543.0 91.0 L660.0 91.0" fill="none" stroke="#606062" stroke-width="2.08" stroke-linejoin="round"/>
<path d="M459.0 114.0 L545.0 114.0" fill="none" stroke="#606062" stroke-width="1.69" stroke-linejoin="round"/>
<path d="M545.0 115.0 L640.0 115.0" fill="none" stroke="#606062" stroke-width="1.56" stroke-linejoin="round"/>
<path d="M459.0 8.0 L640.0 8.0" fill="none" stroke="#606062" stroke-width="1.3" stroke-linejoin="round"/>
<path d="M585.0 46.0 L640.0 46.0" fill="none" stroke="#606062" stroke-width="1.3" stroke-linejoin="round"/>
<path d="M585.0 103.0 L640.0 103.0" fill="none" stroke="#606062" stroke-width="1.3" stroke-linejoin="round"/>
<path d="M465.0 40.0 L465.0 130.0" fill="none" stroke="#606062" stroke-width="1.82" stroke-linejoin="round"/>
<path d="M470.0 26.0 L470.0 78.0" fill="none" stroke="#606062" stroke-width="1.56" stroke-linejoin="round"/>
<path d="M493.0 78.0 L493.0 130.0" fill="none" stroke="#606062" stroke-width="1.69" stroke-linejoin="round"/>
<path d="M510.6 78.0 L510.6 130.0" fill="none" stroke="#606062" stroke-width="1.69" stroke-linejoin="round"/>
<path d="M531.0 0.0 L531.0 61.0" fill="none" stroke="#606062" stroke-width="1.69" stroke-linejoin="round"/>
<path d="M541.4 60.0 L541.4 135.0" fill="none" stroke="#606062" stroke-width="1.82" stroke-linejoin="round"/>
<path d="M552.0 0.0 L552.0 39.0" fill="none" stroke="#606062" stroke-width="1.69" stroke-linejoin="round"/>
<path d="M575.0 76.0 L575.0 135.0" fill="none" stroke="#606062" stroke-width="1.69" stroke-linejoin="round"/>
<path d="M584.6 0.0 L584.6 135.0" fill="none" stroke="#606062" stroke-width="2.08" stroke-linejoin="round"/>
<path d="M592.6 24.0 L592.6 135.0" fill="none" stroke="#606062" stroke-width="1.82" stroke-linejoin="round"/>
<path d="M617.0 91.0 L617.0 135.0" fill="none" stroke="#606062" stroke-width="1.82" stroke-linejoin="round"/>
<path d="M639.6 0.0 L639.6 116.0" fill="none" stroke="#606062" stroke-width="1.82" stroke-linejoin="round"/>
<path d="M521.0 61.0 L521.0 78.0" fill="none" stroke="#606062" stroke-width="1.3" stroke-linejoin="round"/>
<path d="M563.0 24.0 L563.0 78.0" fill="none" stroke="#606062" stroke-width="1.3" stroke-linejoin="round"/>
<path d="M605.0 0.0 L605.0 91.0" fill="none" stroke="#606062" stroke-width="1.3" stroke-linejoin="round"/>
<path d="M625.0 0.0 L625.0 91.0" fill="none" stroke="#606062" stroke-width="1.3" stroke-linejoin="round"/>
<path d="M479.0 0.0 L494.0 39.0 L509.0 77.0" fill="none" stroke="#606062" stroke-width="1.95" stroke-linejoin="round"/>
<path d="M521.0 0.0 L494.0 39.0 L465.0 78.0" fill="none" stroke="#606062" stroke-width="1.95" stroke-linejoin="round"/>
<path d="M459.0 20.0 L494.0 39.0 L543.0 60.0 L575.0 77.0 L611.0 92.0 L659.0 120.0 L690.0 136.0 L719.0 147.0" fill="none" stroke="#606062" stroke-width="2.08" stroke-linejoin="round"/>
<path d="M570.0 0.0 L552.0 39.0 L542.0 60.0 L535.0 77.0" fill="none" stroke="#606062" stroke-width="1.95" stroke-linejoin="round"/>
<path d="M503.0 60.0 L552.0 39.0 L639.0 2.0" fill="none" stroke="#606062" stroke-width="1.95" stroke-linejoin="round"/>
<path d="M583.0 0.0 L655.0 43.0" fill="none" stroke="#606062" stroke-width="1.95" stroke-linejoin="round"/>
<path d="M543.0 94.0 L655.0 43.0" fill="none" stroke="#606062" stroke-width="2.08" stroke-linejoin="round"/>
<path d="M465.0 78.0 L509.0 98.0 L541.0 112.0" fill="none" stroke="#606062" stroke-width="1.82" stroke-linejoin="round"/>
<path d="M459.0 102.0 L495.0 130.0 L520.0 148.0" fill="none" stroke="#606062" stroke-width="1.95" stroke-linejoin="round"/>
<path d="M459.0 56.0 L465.0 78.0 L459.0 100.0" fill="none" stroke="#606062" stroke-width="1.69" stroke-linejoin="round"/>
<circle cx="494" cy="39" r="2.6" fill="none" stroke="#606062" stroke-width="1.2"/>
<circle cx="552" cy="39" r="2.6" fill="none" stroke="#606062" stroke-width="1.2"/>
<circle cx="465" cy="78" r="2.6" fill="none" stroke="#606062" stroke-width="1.2"/>
<circle cx="655" cy="43" r="2.6" fill="none" stroke="#606062" stroke-width="1.2"/>
<path d="M655.0 45.0 L700.0 26.0 L759.0 0.0" fill="none" stroke="#606062" stroke-width="3.38" stroke-linejoin="round"/>
<path d="M655.0 43.0 L700.0 66.0 L747.0 91.0 L787.0 101.0 L820.0 105.0 L859.0 110.0 L879.0 114.0 L895.0 120.0 L915.0 132.0" fill="none" stroke="#606062" stroke-width="2.34" stroke-linejoin="round"/>
<path d="M791.0 0.0 L778.0 26.0 L765.0 52.0 L756.0 72.0 L747.0 91.0 L739.0 110.0 L731.0 130.0" fill="none" stroke="#606062" stroke-width="2.34" stroke-linejoin="round"/>
<path d="M705.0 0.0 C705.5 3.7 708.8 16.3 708.0 22.0 C707.2 27.7 703.2 30.3 700.0 34.0 C696.8 37.7 691.8 40.0 689.0 44.0 C686.2 48.0 684.0 55.7 683.0 58.0" fill="none" stroke="#606062" stroke-width="1.82" stroke-linejoin="round"/>
<path d="M713.0 24.0 L740.0 37.0 L765.0 52.0" fill="none" stroke="#606062" stroke-width="1.82" stroke-linejoin="round"/>
<path d="M768.0 0.0 L781.0 15.0" fill="none" stroke="#606062" stroke-width="1.69" stroke-linejoin="round"/>
<path d="M659.0 91.0 L747.0 91.0" fill="none" stroke="#606062" stroke-width="1.82" stroke-linejoin="round"/>
<path d="M659.0 127.0 L787.0 127.0" fill="none" stroke="#606062" stroke-width="1.82" stroke-linejoin="round"/>
<path d="M674.0 48.0 L674.0 135.0" fill="none" stroke="#606062" stroke-width="1.69" stroke-linejoin="round"/>
<path d="M684.0 58.0 L684.0 135.0" fill="none" stroke="#606062" stroke-width="1.69" stroke-linejoin="round"/>
<path d="M712.6 74.0 L712.6 135.0" fill="none" stroke="#606062" stroke-width="1.69" stroke-linejoin="round"/>
<path d="M727.0 82.0 L727.0 135.0" fill="none" stroke="#606062" stroke-width="1.69" stroke-linejoin="round"/>
<path d="M746.0 91.0 L746.0 112.0" fill="none" stroke="#606062" stroke-width="1.69" stroke-linejoin="round"/>
<path d="M785.0 101.0 L785.0 120.0" fill="none" stroke="#606062" stroke-width="1.69" stroke-linejoin="round"/>
<path d="M683.0 124.0 L747.0 91.0" fill="none" stroke="#606062" stroke-width="1.82" stroke-linejoin="round"/>
<path d="M965.0 18.0 L951.0 32.0 L932.0 55.0 L913.0 78.0 L890.0 104.0 L867.0 130.0 L852.0 150.0 L843.0 160.0" fill="none" stroke="#565656" stroke-width="4.16" stroke-linejoin="round"/>
<path d="M960.0 0.0 L962.0 32.0 L999.0 70.0" fill="none" stroke="#606062" stroke-width="2.08" stroke-linejoin="round"/>
<path d="M915.0 77.0 C920.8 76.8 939.2 76.5 950.0 76.0 C960.8 75.5 971.8 74.7 980.0 74.0 C988.2 73.3 995.8 72.3 999.0 72.0" fill="none" stroke="#606062" stroke-width="1.95" stroke-linejoin="round"/>
<path d="M919.0 80.0 C924.2 81.3 936.7 84.7 950.0 88.0 C963.3 91.3 990.8 98.0 999.0 100.0" fill="none" stroke="#606062" stroke-width="1.95" stroke-linejoin="round"/>
<path d="M933.0 78.0 L933.0 135.0" fill="none" stroke="#606062" stroke-width="1.69" stroke-linejoin="round"/>
<path d="M895.0 120.0 C900.8 121.0 919.2 124.7 930.0 126.0 C940.8 127.3 948.5 127.0 960.0 128.0 C971.5 129.0 992.5 131.3 999.0 132.0" fill="none" stroke="#606062" stroke-width="1.69" stroke-linejoin="round"/>
<path d="M259.0 176.0 C261.0 174.3 264.3 169.3 271.0 166.0 C277.7 162.7 290.0 158.7 299.0 156.0 C308.0 153.3 317.7 151.7 325.0 150.0 C332.3 148.3 336.7 148.0 343.0 146.0 C349.3 144.0 357.0 139.7 363.0 138.0 C369.0 136.3 374.3 135.3 379.0 136.0 C383.7 136.7 387.0 139.7 391.0 142.0 C395.0 144.3 401.0 148.7 403.0 150.0" fill="none" stroke="#606062" stroke-width="2.6" stroke-linejoin="round"/>
<path d="M325.0 164.0 C324.0 165.7 319.7 168.7 319.0 174.0 C318.3 179.3 320.0 188.7 321.0 196.0 C322.0 203.3 323.0 210.7 325.0 218.0 C327.0 225.3 330.0 234.0 333.0 240.0 C336.0 246.0 339.8 250.0 343.0 254.0 C346.2 258.0 347.2 261.0 352.0 264.0 C356.8 267.0 364.8 270.2 372.0 272.0 C379.2 273.8 391.2 274.5 395.0 275.0" fill="none" stroke="#606062" stroke-width="2.6" stroke-linejoin="round"/>
<path d="M259.0 248.0 C265.7 246.0 286.7 237.0 299.0 236.0 C311.3 235.0 327.3 241.0 333.0 242.0" fill="none" stroke="#606062" stroke-width="1.95" stroke-linejoin="round"/>
<path d="M259.0 168.0 C262.3 168.0 273.7 165.3 279.0 168.0 C284.3 170.7 287.0 178.0 291.0 184.0 C295.0 190.0 298.0 198.0 303.0 204.0 C308.0 210.0 318.0 217.3 321.0 220.0" fill="none" stroke="#606062" stroke-width="1.95" stroke-linejoin="round"/>
<path d="M259.0 176.0 L319.0 176.0" fill="none" stroke="#606062" stroke-width="1.69" stroke-linejoin="round"/>
<path d="M259.0 212.0 C265.0 209.7 285.0 201.0 295.0 198.0 C305.0 195.0 315.0 194.7 319.0 194.0" fill="none" stroke="#606062" stroke-width="1.82" stroke-linejoin="round"/>
<path d="M259.0 196.0 L265.0 212.0" fill="none" stroke="#606062" stroke-width="1.56" stroke-linejoin="round"/>
<path d="M259.0 260.0 C265.8 258.3 286.5 250.8 300.0 250.0 C313.5 249.2 333.3 254.2 340.0 255.0" fill="none" stroke="#606062" stroke-width="1.69" stroke-linejoin="round"/>
<path d="M300.0 250.0 L304.0 262.0" fill="none" stroke="#606062" stroke-width="1.56" stroke-linejoin="round"/>
<path d="M391.0 142.0 C393.0 145.7 399.0 156.7 403.0 164.0 C407.0 171.3 411.0 180.3 415.0 186.0 C419.0 191.7 424.0 194.3 427.0 198.0 C430.0 201.7 431.8 204.8 433.0 208.0 C434.2 211.2 434.4 212.7 434.0 217.0 C433.6 221.3 432.3 228.5 430.6 233.8 C428.9 239.1 426.3 244.2 424.0 249.0 C421.7 253.8 419.0 258.7 417.0 262.4 C415.0 266.1 412.8 269.6 412.0 271.0" fill="none" stroke="#606062" stroke-width="2.34" stroke-linejoin="round"/>
<path d="M385.0 285.0 C385.0 284.3 384.2 282.8 385.0 281.0 C385.8 279.2 387.2 275.8 390.0 274.0 C392.8 272.2 397.5 270.8 402.0 270.0 C406.5 269.2 411.7 268.6 417.0 269.0 C422.3 269.4 428.3 271.8 434.0 272.6 C439.7 273.4 445.9 274.3 451.0 274.0 C456.1 273.7 460.5 272.9 464.4 271.0 C468.3 269.1 471.7 265.8 474.5 262.4 C477.3 259.0 479.1 254.8 481.3 250.6 C483.6 246.4 485.2 241.8 488.0 237.0 C490.8 232.2 494.2 226.9 498.0 222.0 C501.8 217.1 506.8 210.6 510.5 207.6 C514.2 204.6 516.2 204.8 520.0 204.0 C523.8 203.2 529.0 204.0 533.0 203.0 C537.0 202.0 540.5 200.2 544.0 198.0 C547.5 195.8 552.1 191.3 553.7 190.0" fill="none" stroke="#606062" stroke-width="3.51" stroke-linejoin="round"/>
<path d="M437.4 217.0 C439.1 218.3 444.4 222.2 447.5 225.0 C450.6 227.8 453.8 230.4 456.0 233.8 C458.2 237.2 460.2 241.1 461.0 245.6 C461.8 250.1 461.3 256.1 461.0 260.8 C460.7 265.5 459.3 271.8 459.0 274.0" fill="none" stroke="#606062" stroke-width="2.08" stroke-linejoin="round"/>
<path d="M380.0 255.7 C382.8 255.7 393.3 256.3 397.0 255.7 C400.7 255.1 399.2 251.7 402.0 252.0 C404.8 252.3 410.1 257.9 413.8 257.4 C417.5 256.9 422.3 250.4 424.0 249.0" fill="none" stroke="#606062" stroke-width="1.69" stroke-linejoin="round"/>
<path d="M429.0 279.0 C428.7 281.6 427.6 289.4 427.0 294.5 C426.4 299.6 425.8 307.0 425.6 309.5" fill="none" stroke="#606062" stroke-width="1.95" stroke-linejoin="round"/>
<path d="M325.0 150.0 C325.8 147.5 326.7 138.0 330.0 135.0 C333.3 132.0 342.5 132.5 345.0 132.0" fill="none" stroke="#606062" stroke-width="1.56" stroke-linejoin="round"/>
<path d="M343.0 146.0 L346.0 132.0" fill="none" stroke="#606062" stroke-width="1.56" stroke-linejoin="round"/>
<path d="M299.0 156.0 C299.7 153.3 302.8 144.3 303.0 140.0 C303.2 135.7 300.5 131.7 300.0 130.0" fill="none" stroke="#606062" stroke-width="1.56" stroke-linejoin="round"/>
<path d="M340.0 170.0 C343.3 168.3 352.5 161.7 360.0 160.0 C367.5 158.3 378.3 157.5 385.0 160.0 C391.7 162.5 395.8 169.2 400.0 175.0 C404.2 180.8 408.3 191.7 410.0 195.0" fill="none" stroke="#4f4f4f" stroke-width="1.17" stroke-linejoin="round"/>
<path d="M345.0 200.0 C348.3 198.3 358.3 190.0 365.0 190.0 C371.7 190.0 379.2 195.0 385.0 200.0 C390.8 205.0 396.7 213.3 400.0 220.0 C403.3 226.7 404.2 236.7 405.0 240.0" fill="none" stroke="#4f4f4f" stroke-width="1.17" stroke-linejoin="round"/>
<path d="M350.0 225.0 C353.3 226.7 363.3 231.7 370.0 235.0 C376.7 238.3 383.3 243.3 390.0 245.0 C396.7 246.7 406.7 245.0 410.0 245.0" fill="none" stroke="#4f4f4f" stroke-width="1.17" stroke-linejoin="round"/>
<path d="M365.0 160.0 C365.5 165.0 368.5 179.2 368.0 190.0 C367.5 200.8 363.0 219.2 362.0 225.0" fill="none" stroke="#4f4f4f" stroke-width="1.17" stroke-linejoin="round"/>
<path d="M385.0 160.0 C385.5 166.7 386.8 185.8 388.0 200.0 C389.2 214.2 391.3 237.5 392.0 245.0" fill="none" stroke="#4f4f4f" stroke-width="1.17" stroke-linejoin="round"/>
<path d="M404.0 136.9 L423.0 133.0 L442.5 129.6" fill="none" stroke="#606062" stroke-width="2.86" stroke-linejoin="round"/>
<path d="M430.5 166.6 L456.0 155.3" fill="none" stroke="#606062" stroke-width="2.6" stroke-linejoin="round"/>
<path d="M442.5 129.6 C444.1 129.0 447.4 126.9 452.0 126.0 C456.6 125.1 463.2 124.3 470.0 124.0 C476.8 123.7 489.2 124.0 493.0 124.0" fill="none" stroke="#606062" stroke-width="2.08" stroke-linejoin="round"/>
<path d="M456.0 155.3 L462.0 151.0" fill="none" stroke="#606062" stroke-width="2.08" stroke-linejoin="round"/>
<circle cx="467" cy="149.5" r="4.2" fill="none" stroke="#606062" stroke-width="1.4"/>
<path d="M441.0 100.0 C442.5 101.7 446.5 107.3 450.0 110.0 C453.5 112.7 457.0 115.0 462.0 116.0 C467.0 117.0 472.0 116.5 480.0 116.0 C488.0 115.5 505.0 113.5 510.0 113.0" fill="none" stroke="#606062" stroke-width="1.69" stroke-linejoin="round"/>
<path d="M455.0 128.0 C455.5 130.0 456.7 136.7 458.0 140.0 C459.3 143.3 462.2 146.7 463.0 148.0" fill="none" stroke="#606062" stroke-width="1.95" stroke-linejoin="round"/>
<path d="M409.0 148.0 C410.2 149.7 413.5 154.7 416.0 158.0 C418.5 161.3 421.5 164.7 424.0 168.0 C426.5 171.3 428.5 174.8 431.0 178.0 C433.5 181.2 436.0 184.5 439.0 187.0 C442.0 189.5 447.3 192.0 449.0 193.0" fill="none" stroke="#606062" stroke-width="2.08" stroke-linejoin="round"/>
<path d="M459.0 160.0 C462.3 160.2 470.7 161.0 479.0 161.0 C487.3 161.0 501.3 159.7 509.0 160.0 C516.7 160.3 520.0 160.0 525.0 163.0 C530.0 166.0 534.3 173.8 539.0 178.0 C543.7 182.2 546.3 186.5 553.0 188.0 C559.7 189.5 568.0 187.3 579.0 187.0 C590.0 186.7 608.8 185.7 619.0 186.0 C629.2 186.3 633.3 187.7 640.0 189.0 C646.7 190.3 655.8 193.2 659.0 194.0" fill="none" stroke="#606062" stroke-width="3.9" stroke-linejoin="round"/>
<path d="M492.8 243.0 L505.0 226.0 L518.5 209.0 L530.0 206.0" fill="none" stroke="#606062" stroke-width="2.86" stroke-linejoin="round"/>
<path d="M497.0 247.0 L509.0 230.0 L522.0 212.0" fill="none" stroke="#606062" stroke-width="1.04" stroke-linejoin="round"/>
<path d="M500.0 250.0 L512.0 233.0 L525.0 215.0" fill="none" stroke="#606062" stroke-width="1.04" stroke-linejoin="round"/>
<path d="M449.0 192.0 C450.8 194.2 456.5 201.0 460.0 205.0 C463.5 209.0 466.7 212.3 470.0 216.0 C473.3 219.7 476.7 223.2 480.0 227.0 C483.3 230.8 486.7 235.2 490.0 239.0 C493.3 242.8 497.0 246.8 500.0 250.0 C503.0 253.2 505.8 255.0 508.0 258.0 C510.2 261.0 511.9 264.7 513.0 268.0 C514.1 271.3 514.7 275.0 514.5 278.0 C514.3 281.0 513.4 283.7 512.0 286.0 C510.6 288.3 508.3 290.0 506.0 292.0 C503.7 294.0 500.7 295.7 498.0 298.0 C495.3 300.3 492.8 302.0 490.0 306.0 C487.2 310.0 483.7 315.0 481.0 322.0 C478.3 329.0 475.8 338.7 474.0 348.0 C472.2 357.3 470.0 368.2 470.0 378.0 C470.0 387.8 471.5 399.3 474.0 407.0 C476.5 414.7 483.2 421.2 485.0 424.0" fill="none" stroke="#606062" stroke-width="2.21" stroke-linejoin="round"/>
<path d="M539.0 160.0 L659.0 160.0" fill="none" stroke="#606062" stroke-width="1.95" stroke-linejoin="round"/>
<path d="M459.0 134.0 L659.0 134.0" fill="none" stroke="#606062" stroke-width="1.69" stroke-linejoin="round"/>
<path d="M543.0 147.0 L659.0 147.0" fill="none" stroke="#606062" stroke-width="1.95" stroke-linejoin="round"/>
<path d="M543.0 173.0 L640.0 173.0" fill="none" stroke="#606062" stroke-width="1.43" stroke-linejoin="round"/>
<path d="M584.0 202.0 L659.0 202.0" fill="none" stroke="#606062" stroke-width="1.43" stroke-linejoin="round"/>
<path d="M591.0 218.0 L659.0 218.0" fill="none" stroke="#606062" stroke-width="1.95" stroke-linejoin="round"/>
<path d="M466.0 130.0 L466.0 160.0" fill="none" stroke="#606062" stroke-width="1.56" stroke-linejoin="round"/>
<path d="M510.0 130.0 L510.0 160.0" fill="none" stroke="#606062" stroke-width="1.69" stroke-linejoin="round"/>
<path d="M537.0 130.0 L537.0 178.0" fill="none" stroke="#606062" stroke-width="1.69" stroke-linejoin="round"/>
<path d="M543.0 130.0 L543.0 186.0" fill="none" stroke="#606062" stroke-width="1.56" stroke-linejoin="round"/>
<path d="M559.0 130.0 L559.0 188.0" fill="none" stroke="#606062" stroke-width="1.56" stroke-linejoin="round"/>
<path d="M584.6 130.0 L584.6 208.0" fill="none" stroke="#606062" stroke-width="1.82" stroke-linejoin="round"/>
<path d="M619.0 130.0 L619.0 218.0" fill="none" stroke="#606062" stroke-width="1.69" stroke-linejoin="round"/>
<path d="M639.6 130.0 L639.6 250.0" fill="none" stroke="#606062" stroke-width="2.08" stroke-linejoin="round"/>
<path d="M600.0 160.0 L600.0 218.0" fill="none" stroke="#606062" stroke-width="1.3" stroke-linejoin="round"/>
<path d="M583.0 208.0 L591.0 218.0" fill="none" stroke="#606062" stroke-width="1.82" stroke-linejoin="round"/>
<path d="M619.0 186.0 C620.0 183.3 625.0 174.3 625.0 170.0 C625.0 165.7 620.0 161.7 619.0 160.0" fill="none" stroke="#606062" stroke-width="2.08" stroke-linejoin="round"/>
<path d="M545.0 148.0 L600.0 168.0 L640.0 189.0" fill="none" stroke="#606062" stroke-width="1.69" stroke-linejoin="round"/>
<path d="M520.0 148.0 L545.0 168.0 L584.0 186.0" fill="none" stroke="#606062" stroke-width="1.69" stroke-linejoin="round"/>
<path d="M603.0 222.0 L603.0 296.0" fill="none" stroke="#525252" stroke-width="1.04" stroke-linejoin="round"/>
<path d="M609.0 222.0 L609.0 296.0" fill="none" stroke="#525252" stroke-width="1.04" stroke-linejoin="round"/>
<path d="M616.0 222.0 L616.0 296.0" fill="none" stroke="#525252" stroke-width="1.04" stroke-linejoin="round"/>
<path d="M599.0 232.0 L622.0 232.0" fill="none" stroke="#525252" stroke-width="1.04" stroke-linejoin="round"/>
<path d="M599.0 246.0 L622.0 246.0" fill="none" stroke="#525252" stroke-width="1.04" stroke-linejoin="round"/>
<path d="M599.0 262.0 L622.0 262.0" fill="none" stroke="#525252" stroke-width="1.04" stroke-linejoin="round"/>
<path d="M599.0 278.0 L622.0 278.0" fill="none" stroke="#525252" stroke-width="1.04" stroke-linejoin="round"/>
<path d="M659.0 147.5 L999.0 147.5" fill="none" stroke="#606062" stroke-width="2.08" stroke-linejoin="round"/>
<path d="M719.0 147.0 L749.0 130.0" fill="none" stroke="#606062" stroke-width="1.82" stroke-linejoin="round"/>
<path d="M719.0 147.0 L747.0 190.0 L755.0 207.0" fill="none" stroke="#606062" stroke-width="1.82" stroke-linejoin="round"/>
<path d="M671.0 170.0 L719.0 147.0" fill="none" stroke="#606062" stroke-width="1.82" stroke-linejoin="round"/>
<path d="M640.0 147.0 L659.0 158.0 L700.0 180.0 L755.0 207.0 L787.0 224.0 L820.0 240.0 L859.0 258.0 L880.0 268.0" fill="none" stroke="#606062" stroke-width="2.34" stroke-linejoin="round"/>
<path d="M659.0 160.0 L773.0 160.0 L773.0 178.0 L747.0 190.0" fill="none" stroke="#606062" stroke-width="1.69" stroke-linejoin="round"/>
<path d="M663.0 130.0 L663.0 200.0" fill="none" stroke="#606062" stroke-width="1.69" stroke-linejoin="round"/>
<path d="M674.0 130.0 L674.0 200.0" fill="none" stroke="#606062" stroke-width="1.69" stroke-linejoin="round"/>
<path d="M684.0 130.0 L684.0 205.0" fill="none" stroke="#606062" stroke-width="1.69" stroke-linejoin="round"/>
<path d="M699.0 180.0 L699.0 210.0" fill="none" stroke="#606062" stroke-width="1.69" stroke-linejoin="round"/>
<path d="M713.0 130.0 L713.0 236.0" fill="none" stroke="#606062" stroke-width="1.69" stroke-linejoin="round"/>
<path d="M719.0 150.0 L719.0 212.0" fill="none" stroke="#606062" stroke-width="1.69" stroke-linejoin="round"/>
<path d="M659.0 194.0 C662.3 195.0 672.3 197.7 679.0 200.0 C685.7 202.3 692.3 206.0 699.0 208.0 C705.7 210.0 712.3 211.0 719.0 212.0 C725.7 213.0 733.0 214.3 739.0 214.0 C745.0 213.7 749.7 211.3 755.0 210.0 C760.3 208.7 765.3 208.2 771.0 206.0 C776.7 203.8 786.0 198.5 789.0 197.0" fill="none" stroke="#606062" stroke-width="2.86" stroke-linejoin="round"/>
<path d="M659.0 182.0 L700.0 182.0" fill="none" stroke="#606062" stroke-width="1.3" stroke-linejoin="round"/>
<path d="M659.0 218.0 L690.0 218.0 L713.0 214.0" fill="none" stroke="#606062" stroke-width="1.82" stroke-linejoin="round"/>
<ellipse cx="795" cy="150" rx="7.5" ry="11" fill="none" stroke="#606062" stroke-width="1.3"/>
<path d="M776.0 145.0 L800.0 145.0" fill="none" stroke="#606062" stroke-width="1.56" stroke-linejoin="round"/>
<path d="M776.0 150.0 L800.0 150.0" fill="none" stroke="#606062" stroke-width="1.56" stroke-linejoin="round"/>
<path d="M859.0 144.0 C857.5 144.7 852.7 146.7 850.0 148.0 C847.3 149.3 845.5 148.3 843.0 152.0 C840.5 155.7 837.3 164.3 835.0 170.0 C832.7 175.7 831.7 180.7 829.0 186.0 C826.3 191.3 822.7 197.0 819.0 202.0 C815.3 207.0 811.0 212.3 807.0 216.0 C803.0 219.7 799.7 221.7 795.0 224.0 C790.3 226.3 785.0 227.7 779.0 230.0 C773.0 232.3 765.7 234.7 759.0 238.0 C752.3 241.3 744.3 246.3 739.0 250.0 C733.7 253.7 731.5 256.0 727.0 260.0 C722.5 264.0 717.8 269.0 712.0 274.0 C706.2 279.0 695.3 287.3 692.0 290.0" fill="none" stroke="#606062" stroke-width="3.38" stroke-linejoin="round"/>
<path d="M859.0 176.0 C857.5 178.3 853.3 184.3 850.0 190.0 C846.7 195.7 843.7 204.3 839.0 210.0 C834.3 215.7 828.0 220.0 822.0 224.0 C816.0 228.0 810.0 229.7 803.0 234.0 C796.0 238.3 786.7 245.7 780.0 250.0 C773.3 254.3 769.0 256.3 763.0 260.0 C757.0 263.7 747.2 270.0 744.0 272.0" fill="none" stroke="#606062" stroke-width="1.95" stroke-linejoin="round"/>
<path d="M885.0 130.0 L870.0 158.0 L855.0 184.0 L839.0 210.0" fill="none" stroke="#606062" stroke-width="1.95" stroke-linejoin="round"/>
<path d="M839.0 210.0 C839.7 218.3 841.5 244.5 843.0 260.0 C844.5 275.5 847.2 295.8 848.0 303.0" fill="none" stroke="#606062" stroke-width="1.82" stroke-linejoin="round"/>
<circle cx="839" cy="210" r="2.6" fill="#48484a" stroke="#606062" stroke-width="1.1"/>
<circle cx="755" cy="208" r="2.6" fill="none" stroke="#606062" stroke-width="1.1"/>
<path d="M713.0 236.0 L719.0 246.0 L725.0 256.0 L728.0 262.0" fill="none" stroke="#606062" stroke-width="2.86" stroke-linejoin="round"/>
<path d="M709.0 236.0 L716.0 248.0 L722.0 258.0" fill="none" stroke="#606062" stroke-width="1.82" stroke-linejoin="round"/>
<path d="M787.0 224.0 L770.0 236.0" fill="none" stroke="#606062" stroke-width="1.69" stroke-linejoin="round"/>
<path d="M879.0 148.0 C881.3 151.7 888.3 162.3 893.0 170.0 C897.7 177.7 903.3 188.0 907.0 194.0 C910.7 200.0 912.3 202.3 915.0 206.0 C917.7 209.7 919.3 212.3 923.0 216.0 C926.7 219.7 932.3 224.3 937.0 228.0 C941.7 231.7 944.7 233.3 951.0 238.0 C957.3 242.7 967.0 250.7 975.0 256.0 C983.0 261.3 995.0 267.7 999.0 270.0" fill="none" stroke="#606062" stroke-width="1.95" stroke-linejoin="round"/>
<path d="M907.0 194.0 C909.2 193.0 916.2 191.7 920.0 188.0 C923.8 184.3 926.7 177.0 930.0 172.0 C933.3 167.0 935.8 161.7 940.0 158.0 C944.2 154.3 952.5 151.3 955.0 150.0" fill="none" stroke="#606062" stroke-width="1.69" stroke-linejoin="round"/>
<path d="M939.0 148.0 C940.0 151.7 942.3 163.0 945.0 170.0 C947.7 177.0 951.7 185.7 955.0 190.0 C958.3 194.3 963.3 195.0 965.0 196.0" fill="none" stroke="#606062" stroke-width="1.69" stroke-linejoin="round"/>
<path d="M839.0 210.0 C844.2 212.0 859.8 217.0 870.0 222.0 C880.2 227.0 889.2 234.0 900.0 240.0 C910.8 246.0 929.2 255.0 935.0 258.0" fill="none" stroke="#606062" stroke-width="1.56" stroke-linejoin="round"/>
<path d="M999.0 190.0 L965.0 226.0 L932.0 260.0 L900.0 292.0 L870.0 320.0 L838.0 350.0 L805.0 382.0 L765.0 422.0" fill="none" stroke="#3b3b3b" stroke-width="1.56" stroke-linejoin="round"/>
<path d="M999.0 192.5 L966.5 227.5 L933.5 261.5 L901.5 293.5 L871.5 321.5 L839.5 351.5 L806.5 383.5 L767.0 424.0" fill="none" stroke="#5e5e5e" stroke-width="1.82" stroke-linejoin="round"/>
<path d="M640.0 230.0 C640.0 233.3 639.0 245.7 640.0 250.0 C641.0 254.3 641.7 253.0 646.0 256.0 C650.3 259.0 662.7 266.0 666.0 268.0" fill="none" stroke="#606062" stroke-width="2.86" stroke-linejoin="round"/>
<path d="M666.0 268.0 C666.3 271.0 668.3 279.7 668.0 286.0 C667.7 292.3 666.0 298.3 664.0 306.0 C662.0 313.7 658.7 324.7 656.0 332.0 C653.3 339.3 650.7 343.3 648.0 350.0 C645.3 356.7 643.3 363.7 640.0 372.0 C636.7 380.3 631.3 391.3 628.0 400.0 C624.7 408.7 621.3 420.0 620.0 424.0" fill="none" stroke="#606062" stroke-width="3.38" stroke-linejoin="round"/>
<path d="M668.0 288.0 C672.0 288.3 684.7 292.3 692.0 290.0 C699.3 287.7 706.7 279.0 712.0 274.0 C717.3 269.0 720.7 264.0 724.0 260.0 C727.3 256.0 726.7 253.7 732.0 250.0 C737.3 246.3 748.0 241.7 756.0 238.0 C764.0 234.3 776.0 229.7 780.0 228.0" fill="none" stroke="#606062" stroke-width="1.95" stroke-linejoin="round"/>
<path d="M728.0 258.0 C727.0 261.7 724.7 273.7 722.0 280.0 C719.3 286.3 715.7 292.0 712.0 296.0 C708.3 300.0 702.7 300.0 700.0 304.0 C697.3 308.0 697.0 314.0 696.0 320.0 C695.0 326.0 694.7 333.3 694.0 340.0 C693.3 346.7 693.7 351.2 692.0 360.0 C690.3 368.8 687.0 386.2 684.0 393.0 C681.0 399.8 678.2 398.0 674.0 401.0 C669.8 404.0 664.7 407.2 659.0 411.0 C653.3 414.8 643.2 421.8 640.0 424.0" fill="none" stroke="#606062" stroke-width="2.08" stroke-linejoin="round"/>
<path d="M700.0 304.0 C700.7 308.7 700.7 325.3 704.0 332.0 C707.3 338.7 714.0 341.7 720.0 344.0 C726.0 346.3 732.5 346.7 740.0 346.0 C747.5 345.3 758.0 340.2 765.0 340.0 C772.0 339.8 777.0 341.7 782.0 345.0 C787.0 348.3 789.5 356.5 795.0 360.0 C800.5 363.5 808.3 365.8 815.0 366.0 C821.7 366.2 827.2 364.0 835.0 361.0 C842.8 358.0 854.2 349.8 862.0 348.0 C869.8 346.2 874.8 348.0 882.0 350.0 C889.2 352.0 897.0 355.7 905.0 360.0 C913.0 364.3 922.5 371.3 930.0 376.0 C937.5 380.7 944.7 383.8 950.0 388.0 C955.3 392.2 957.8 396.8 962.0 401.0 C966.2 405.2 971.2 409.2 975.0 413.0 C978.8 416.8 983.3 422.2 985.0 424.0" fill="none" stroke="#606062" stroke-width="2.47" stroke-linejoin="round"/>
<path d="M728.0 270.0 C731.7 270.7 742.2 272.3 750.0 274.0 C757.8 275.7 765.8 275.2 775.0 280.0 C784.2 284.8 798.8 298.0 805.0 303.0 C811.2 308.0 807.0 310.2 812.0 310.0 C817.0 309.8 827.2 304.5 835.0 302.0 C842.8 299.5 855.0 296.2 859.0 295.0" fill="none" stroke="#606062" stroke-width="1.95" stroke-linejoin="round"/>
<path d="M744.0 272.0 L780.0 250.0" fill="none" stroke="#606062" stroke-width="1.69" stroke-linejoin="round"/>
<path d="M805.0 303.0 C805.0 308.3 805.5 327.5 805.0 335.0 C804.5 342.5 805.3 345.8 802.0 348.0 C798.7 350.2 787.8 348.0 785.0 348.0" fill="none" stroke="#606062" stroke-width="1.69" stroke-linejoin="round"/>
<path d="M812.0 310.0 C813.7 313.8 817.3 325.8 822.0 333.0 C826.7 340.2 833.8 347.5 840.0 353.0 C846.2 358.5 855.8 363.8 859.0 366.0" fill="none" stroke="#606062" stroke-width="1.82" stroke-linejoin="round"/>
<path d="M659.0 408.0 C664.0 406.3 676.5 401.3 689.0 398.0 C701.5 394.7 721.3 391.7 734.0 388.0 C746.7 384.3 757.8 380.5 765.0 376.0 C772.2 371.5 772.8 364.0 777.0 361.0 C781.2 358.0 787.8 358.5 790.0 358.0" fill="none" stroke="#606062" stroke-width="1.95" stroke-linejoin="round"/>
<path d="M702.0 398.0 L704.0 424.0" fill="none" stroke="#606062" stroke-width="1.69" stroke-linejoin="round"/>
<path d="M845.0 260.0 C845.7 266.3 846.7 284.2 849.0 298.0 C851.3 311.8 853.5 328.0 859.0 343.0 C864.5 358.0 874.8 374.5 882.0 388.0 C889.2 401.5 898.7 418.0 902.0 424.0" fill="none" stroke="#606062" stroke-width="1.95" stroke-linejoin="round"/>
<path d="M799.0 298.0 C801.0 300.0 805.5 309.7 811.0 310.0 C816.5 310.3 823.5 302.8 832.0 300.0 C840.5 297.2 853.7 293.3 862.0 293.0 C870.3 292.7 874.8 298.0 882.0 298.0 C889.2 298.0 895.3 294.7 905.0 293.0 C914.7 291.3 930.5 290.2 940.0 288.0 C949.5 285.8 952.2 281.8 962.0 280.0 C971.8 278.2 992.8 277.5 999.0 277.0" fill="none" stroke="#606062" stroke-width="1.95" stroke-linejoin="round"/>
<path d="M844.0 260.0 C848.3 262.0 860.7 267.8 870.0 272.0 C879.3 276.2 888.3 282.3 900.0 285.0 C911.7 287.7 933.3 287.5 940.0 288.0" fill="none" stroke="#606062" stroke-width="1.69" stroke-linejoin="round"/>
<path d="M900.0 308.0 C906.2 313.0 924.5 329.7 937.0 338.0 C949.5 346.3 964.7 352.5 975.0 358.0 C985.3 363.5 995.0 368.8 999.0 371.0" fill="none" stroke="#606062" stroke-width="1.69" stroke-linejoin="round"/>
<path d="M618.0 336.0 C621.7 335.0 633.7 330.7 640.0 330.0 C646.3 329.3 653.3 331.7 656.0 332.0" fill="none" stroke="#606062" stroke-width="1.56" stroke-linejoin="round"/>
<path d="M610.0 360.0 C613.3 359.3 623.7 357.7 630.0 356.0 C636.3 354.3 645.0 351.0 648.0 350.0" fill="none" stroke="#606062" stroke-width="1.56" stroke-linejoin="round"/>
<path d="M606.0 378.0 L598.0 424.0" fill="none" stroke="#535353" stroke-width="1.17" stroke-linejoin="round"/>
<path d="M612.0 378.0 L604.0 424.0" fill="none" stroke="#535353" stroke-width="1.17" stroke-linejoin="round"/>
<path d="M620.0 378.0 L612.0 424.0" fill="none" stroke="#535353" stroke-width="1.17" stroke-linejoin="round"/>
<path d="M592.0 384.0 L625.0 384.0" fill="none" stroke="#535353" stroke-width="1.17" stroke-linejoin="round"/>
<path d="M592.0 392.0 L625.0 392.0" fill="none" stroke="#535353" stroke-width="1.17" stroke-linejoin="round"/>
<path d="M592.0 400.0 L625.0 400.0" fill="none" stroke="#535353" stroke-width="1.17" stroke-linejoin="round"/>
<path d="M592.0 410.0 L625.0 410.0" fill="none" stroke="#535353" stroke-width="1.17" stroke-linejoin="round"/>
<path d="M415.0 267.0 C411.7 268.3 400.0 272.0 395.0 275.0 C390.0 278.0 387.3 281.2 385.0 285.0 C382.7 288.8 381.8 293.8 381.0 298.0 C380.2 302.2 381.5 305.0 380.0 310.0 C378.5 315.0 375.3 321.7 372.0 328.0 C368.7 334.3 363.7 342.0 360.0 348.0 C356.3 354.0 353.4 359.0 350.0 364.0 C346.6 369.0 343.2 372.3 339.5 378.0 C335.8 383.7 331.8 391.7 328.0 398.0 C324.2 404.3 319.8 411.3 317.0 416.0 C314.2 420.7 312.0 424.3 311.0 426.0" fill="none" stroke="#585858" stroke-width="4.42" stroke-linejoin="round"/>
<path d="M259.0 313.0 L300.0 301.0 L340.0 290.0 L380.0 278.0" fill="none" stroke="#606062" stroke-width="1.95" stroke-linejoin="round"/>
<path d="M304.0 260.0 C304.8 266.3 309.0 285.5 309.0 298.0 C309.0 310.5 308.2 323.7 304.0 335.0 C299.8 346.3 289.8 357.5 284.0 366.0 C278.2 374.5 273.2 380.7 269.0 386.0 C264.8 391.3 260.7 396.0 259.0 398.0" fill="none" stroke="#606062" stroke-width="1.95" stroke-linejoin="round"/>
<path d="M259.0 270.0 C264.0 276.7 281.5 298.7 289.0 310.0 C296.5 321.3 297.7 327.8 304.0 338.0 C310.3 348.2 320.7 363.0 327.0 371.0 C333.3 379.0 338.2 381.2 342.0 386.0 C345.8 390.8 347.7 393.7 350.0 400.0 C352.3 406.3 355.0 420.0 356.0 424.0" fill="none" stroke="#606062" stroke-width="1.95" stroke-linejoin="round"/>
<path d="M390.0 303.0 C390.0 311.8 388.3 343.0 390.0 356.0 C391.7 369.0 396.7 373.5 400.0 381.0 C403.3 388.5 408.0 393.8 410.0 401.0 C412.0 408.2 411.7 420.2 412.0 424.0" fill="none" stroke="#606062" stroke-width="1.95" stroke-linejoin="round"/>
<path d="M390.0 345.5 L459.0 345.5" fill="none" stroke="#606062" stroke-width="1.69" stroke-linejoin="round"/>
<path d="M425.0 280.0 C424.7 283.8 417.3 298.0 423.0 303.0 C428.7 308.0 453.0 308.8 459.0 310.0" fill="none" stroke="#606062" stroke-width="1.69" stroke-linejoin="round"/>
<path d="M455.0 300.0 L455.0 424.0" fill="none" stroke="#606062" stroke-width="2.34" stroke-linejoin="round"/>
<path d="M259.0 360.0 C261.7 363.3 268.2 373.7 275.0 380.0 C281.8 386.3 290.8 393.3 300.0 398.0 C309.2 402.7 320.0 406.0 330.0 408.0 C340.0 410.0 355.0 409.7 360.0 410.0" fill="none" stroke="#606062" stroke-width="1.69" stroke-linejoin="round"/>
<path d="M500.0 300.0 L512.0 350.0 L520.0 405.0" fill="none" stroke="#4f4f4f" stroke-width="2.86" stroke-linejoin="round"/>
<path d="M492.0 310.0 L530.0 400.0" fill="none" stroke="#4f4f4f" stroke-width="2.86" stroke-linejoin="round"/>
<path d="M530.0 330.0 L498.0 400.0" fill="none" stroke="#4f4f4f" stroke-width="2.86" stroke-linejoin="round"/>
<path d="M488.0 345.0 L534.0 372.0" fill="none" stroke="#4f4f4f" stroke-width="2.86" stroke-linejoin="round"/>
<path d="M271.0 130.0 C274.0 132.3 284.3 139.7 289.0 144.0 C293.7 148.3 297.3 154.0 299.0 156.0" fill="none" stroke="#57575a" stroke-width="1.1" stroke-linejoin="round"/>
<path d="M315.0 130.0 C315.7 132.0 317.3 138.7 319.0 142.0 C320.7 145.3 324.0 148.7 325.0 150.0" fill="none" stroke="#57575a" stroke-width="1.1" stroke-linejoin="round"/>
<path d="M345.0 130.0 L343.0 146.0" fill="none" stroke="#57575a" stroke-width="1.1" stroke-linejoin="round"/>
<path d="M259.0 150.0 L271.0 166.0" fill="none" stroke="#57575a" stroke-width="1.1" stroke-linejoin="round"/>
<path d="M299.0 156.0 L301.0 176.0" fill="none" stroke="#57575a" stroke-width="1.1" stroke-linejoin="round"/>
<path d="M279.0 168.0 C280.0 169.3 284.3 171.3 285.0 176.0 C285.7 180.7 283.3 192.7 283.0 196.0" fill="none" stroke="#57575a" stroke-width="1.1" stroke-linejoin="round"/>
<path d="M259.0 190.0 C263.7 189.7 281.0 186.7 287.0 188.0 C293.0 189.3 293.7 196.3 295.0 198.0" fill="none" stroke="#57575a" stroke-width="1.1" stroke-linejoin="round"/>
<path d="M301.0 236.0 L305.0 260.0" fill="none" stroke="#57575a" stroke-width="1.1" stroke-linejoin="round"/>
<path d="M259.0 238.0 L299.0 236.0" fill="none" stroke="#57575a" stroke-width="1.1" stroke-linejoin="round"/>
<path d="M270.0 176.0 C269.7 179.3 269.3 190.0 268.0 196.0 C266.7 202.0 263.0 209.3 262.0 212.0" fill="none" stroke="#57575a" stroke-width="1.1" stroke-linejoin="round"/>
<path d="M259.0 226.0 C262.5 225.0 273.2 220.7 280.0 220.0 C286.8 219.3 293.2 222.0 300.0 222.0 C306.8 222.0 317.5 220.3 321.0 220.0" fill="none" stroke="#57575a" stroke-width="1.1" stroke-linejoin="round"/>
<path d="M283.0 196.0 C284.2 198.3 287.2 205.7 290.0 210.0 C292.8 214.3 298.3 220.0 300.0 222.0" fill="none" stroke="#57575a" stroke-width="1.1" stroke-linejoin="round"/>
<path d="M259.0 140.0 C261.7 141.7 269.8 148.3 275.0 150.0 C280.2 151.7 287.5 150.0 290.0 150.0" fill="none" stroke="#57575a" stroke-width="1.1" stroke-linejoin="round"/>
<path d="M305.0 120.0 C305.8 121.7 310.2 126.7 310.0 130.0 C309.8 133.3 305.0 138.3 304.0 140.0" fill="none" stroke="#57575a" stroke-width="1.1" stroke-linejoin="round"/>
<path d="M259.0 282.0 C262.5 283.3 273.2 286.8 280.0 290.0 C286.8 293.2 296.7 299.2 300.0 301.0" fill="none" stroke="#57575a" stroke-width="1.1" stroke-linejoin="round"/>
<path d="M270.0 290.0 L275.0 310.0" fill="none" stroke="#57575a" stroke-width="1.1" stroke-linejoin="round"/>
<path d="M259.0 335.0 C262.5 334.2 272.5 330.0 280.0 330.0 C287.5 330.0 300.0 334.2 304.0 335.0" fill="none" stroke="#57575a" stroke-width="1.1" stroke-linejoin="round"/>
<path d="M280.0 330.0 L284.0 366.0" fill="none" stroke="#57575a" stroke-width="1.1" stroke-linejoin="round"/>
<path d="M259.0 300.0 C260.8 303.3 265.0 318.3 270.0 320.0 C275.0 321.7 285.8 311.7 289.0 310.0" fill="none" stroke="#57575a" stroke-width="1.1" stroke-linejoin="round"/>
<path d="M320.0 260.0 C321.7 263.3 326.7 275.0 330.0 280.0 C333.3 285.0 338.3 288.3 340.0 290.0" fill="none" stroke="#57575a" stroke-width="1.1" stroke-linejoin="round"/>
<path d="M340.0 255.0 C340.8 258.3 341.7 270.2 345.0 275.0 C348.3 279.8 357.5 282.5 360.0 284.0" fill="none" stroke="#57575a" stroke-width="1.1" stroke-linejoin="round"/>
<path d="M289.0 310.0 L300.0 301.0" fill="none" stroke="#57575a" stroke-width="1.1" stroke-linejoin="round"/>
<path d="M309.0 298.0 L330.0 292.0" fill="none" stroke="#57575a" stroke-width="1.1" stroke-linejoin="round"/>
<path d="M259.0 350.0 C261.7 350.3 269.8 350.3 275.0 352.0 C280.2 353.7 287.5 358.7 290.0 360.0" fill="none" stroke="#57575a" stroke-width="1.1" stroke-linejoin="round"/>
<path d="M400.0 310.0 C403.3 310.8 413.3 314.7 420.0 315.0 C426.7 315.3 434.2 311.5 440.0 312.0 C445.8 312.5 452.5 317.0 455.0 318.0" fill="none" stroke="#57575a" stroke-width="1.1" stroke-linejoin="round"/>
<path d="M412.0 330.0 C416.7 330.3 432.8 332.0 440.0 332.0 C447.2 332.0 452.5 330.3 455.0 330.0" fill="none" stroke="#57575a" stroke-width="1.1" stroke-linejoin="round"/>
<path d="M400.0 362.0 C405.0 362.5 420.8 365.0 430.0 365.0 C439.2 365.0 450.8 362.5 455.0 362.0" fill="none" stroke="#57575a" stroke-width="1.1" stroke-linejoin="round"/>
<path d="M425.0 345.0 C425.3 354.2 426.2 386.8 427.0 400.0 C427.8 413.2 429.5 420.0 430.0 424.0" fill="none" stroke="#57575a" stroke-width="1.1" stroke-linejoin="round"/>
<path d="M440.0 345.0 L441.0 424.0" fill="none" stroke="#57575a" stroke-width="1.1" stroke-linejoin="round"/>
<path d="M395.0 300.0 C395.8 298.3 397.2 292.5 400.0 290.0 C402.8 287.5 410.0 285.8 412.0 285.0" fill="none" stroke="#57575a" stroke-width="1.1" stroke-linejoin="round"/>
<path d="M360.0 300.0 C362.5 300.8 370.0 304.5 375.0 305.0 C380.0 305.5 387.5 303.3 390.0 303.0" fill="none" stroke="#57575a" stroke-width="1.1" stroke-linejoin="round"/>
<path d="M259.0 404.0 C262.5 405.0 273.2 407.3 280.0 410.0 C286.8 412.7 296.7 418.3 300.0 420.0" fill="none" stroke="#57575a" stroke-width="1.1" stroke-linejoin="round"/>
<path d="M320.0 424.0 C321.7 422.0 325.8 415.2 330.0 412.0 C334.2 408.8 342.5 406.2 345.0 405.0" fill="none" stroke="#57575a" stroke-width="1.1" stroke-linejoin="round"/>
<path d="M365.0 410.0 C368.3 410.3 377.2 412.0 385.0 412.0 C392.8 412.0 407.5 410.3 412.0 410.0" fill="none" stroke="#57575a" stroke-width="1.1" stroke-linejoin="round"/>
<path d="M265.0 70.0 C267.5 72.5 274.2 81.7 280.0 85.0 C285.8 88.3 296.7 89.2 300.0 90.0" fill="none" stroke="#57575a" stroke-width="1.1" stroke-linejoin="round"/>
<path d="M290.0 100.0 L292.0 130.0" fill="none" stroke="#57575a" stroke-width="1.1" stroke-linejoin="round"/>
<path d="M305.0 104.0 L308.0 130.0" fill="none" stroke="#57575a" stroke-width="1.1" stroke-linejoin="round"/>
<path d="M345.0 98.0 C345.8 101.0 348.8 110.7 350.0 116.0 C351.2 121.3 351.7 127.7 352.0 130.0" fill="none" stroke="#57575a" stroke-width="1.1" stroke-linejoin="round"/>
<path d="M330.0 118.0 L332.0 130.0" fill="none" stroke="#57575a" stroke-width="1.1" stroke-linejoin="round"/>
<path d="M259.0 80.0 C260.8 81.7 267.3 85.3 270.0 90.0 C272.7 94.7 274.2 105.0 275.0 108.0" fill="none" stroke="#57575a" stroke-width="1.1" stroke-linejoin="round"/>
<path d="M870.0 158.0 C875.0 158.3 890.0 158.8 900.0 160.0 C910.0 161.2 925.0 164.2 930.0 165.0" fill="none" stroke="#57575a" stroke-width="1.1" stroke-linejoin="round"/>
<path d="M893.0 170.0 C890.8 173.3 883.8 181.3 880.0 190.0 C876.2 198.7 871.7 216.7 870.0 222.0" fill="none" stroke="#57575a" stroke-width="1.1" stroke-linejoin="round"/>
<path d="M907.0 194.0 C904.2 195.0 896.2 195.3 890.0 200.0 C883.8 204.7 873.3 218.3 870.0 222.0" fill="none" stroke="#57575a" stroke-width="1.1" stroke-linejoin="round"/>
<path d="M915.0 206.0 C912.5 209.2 902.5 219.3 900.0 225.0 C897.5 230.7 900.0 237.5 900.0 240.0" fill="none" stroke="#57575a" stroke-width="1.1" stroke-linejoin="round"/>
<path d="M940.0 158.0 C945.0 160.0 960.2 165.5 970.0 170.0 C979.8 174.5 994.2 182.5 999.0 185.0" fill="none" stroke="#57575a" stroke-width="1.1" stroke-linejoin="round"/>
<path d="M955.0 190.0 C958.3 191.7 967.7 195.8 975.0 200.0 C982.3 204.2 995.0 212.5 999.0 215.0" fill="none" stroke="#57575a" stroke-width="1.1" stroke-linejoin="round"/>
<path d="M860.0 225.0 C863.3 227.5 872.5 235.8 880.0 240.0 C887.5 244.2 900.8 248.3 905.0 250.0" fill="none" stroke="#57575a" stroke-width="1.1" stroke-linejoin="round"/>
<path d="M848.0 303.0 L870.0 300.0" fill="none" stroke="#57575a" stroke-width="1.1" stroke-linejoin="round"/>
<path d="M775.0 280.0 C777.5 278.3 783.8 273.0 790.0 270.0 C796.2 267.0 802.8 263.7 812.0 262.0 C821.2 260.3 839.5 260.3 845.0 260.0" fill="none" stroke="#57575a" stroke-width="1.1" stroke-linejoin="round"/>
<path d="M790.0 270.0 L800.0 290.0" fill="none" stroke="#57575a" stroke-width="1.1" stroke-linejoin="round"/>
<path d="M735.0 300.0 C739.2 300.8 752.5 305.0 760.0 305.0 C767.5 305.0 776.7 300.8 780.0 300.0" fill="none" stroke="#57575a" stroke-width="1.1" stroke-linejoin="round"/>
<path d="M720.0 320.0 C724.2 320.3 737.5 320.3 745.0 322.0 C752.5 323.7 761.7 328.7 765.0 330.0" fill="none" stroke="#57575a" stroke-width="1.1" stroke-linejoin="round"/>
<path d="M742.0 348.0 C742.5 351.7 746.3 363.3 745.0 370.0 C743.7 376.7 735.8 385.0 734.0 388.0" fill="none" stroke="#57575a" stroke-width="1.1" stroke-linejoin="round"/>
<path d="M765.0 376.0 C769.2 377.5 783.3 382.2 790.0 385.0 C796.7 387.8 802.5 391.7 805.0 393.0" fill="none" stroke="#57575a" stroke-width="1.1" stroke-linejoin="round"/>
<path d="M700.0 365.0 C703.3 365.8 713.0 369.5 720.0 370.0 C727.0 370.5 738.3 368.3 742.0 368.0" fill="none" stroke="#57575a" stroke-width="1.1" stroke-linejoin="round"/>
<path d="M689.0 398.0 C690.8 400.0 697.5 405.7 700.0 410.0 C702.5 414.3 703.3 421.7 704.0 424.0" fill="none" stroke="#57575a" stroke-width="1.1" stroke-linejoin="round"/>
<path d="M734.0 388.0 C735.0 390.8 737.3 399.0 740.0 405.0 C742.7 411.0 748.3 420.8 750.0 424.0" fill="none" stroke="#57575a" stroke-width="1.1" stroke-linejoin="round"/>
<path d="M815.0 366.0 C815.8 370.0 817.5 382.7 820.0 390.0 C822.5 397.3 828.3 406.7 830.0 410.0" fill="none" stroke="#57575a" stroke-width="1.1" stroke-linejoin="round"/>
<path d="M840.0 353.0 C841.7 357.5 845.0 372.2 850.0 380.0 C855.0 387.8 866.7 396.7 870.0 400.0" fill="none" stroke="#57575a" stroke-width="1.1" stroke-linejoin="round"/>
<path d="M882.0 388.0 C885.0 387.5 892.0 387.0 900.0 385.0 C908.0 383.0 925.0 377.5 930.0 376.0" fill="none" stroke="#57575a" stroke-width="1.1" stroke-linejoin="round"/>
<path d="M905.0 293.0 C905.8 297.5 906.7 313.8 910.0 320.0 C913.3 326.2 922.5 328.3 925.0 330.0" fill="none" stroke="#57575a" stroke-width="1.1" stroke-linejoin="round"/>
<path d="M940.0 288.0 C941.7 291.7 944.2 304.7 950.0 310.0 C955.8 315.3 966.8 316.7 975.0 320.0 C983.2 323.3 995.0 328.3 999.0 330.0" fill="none" stroke="#57575a" stroke-width="1.1" stroke-linejoin="round"/>
<path d="M962.0 280.0 L970.0 262.0" fill="none" stroke="#57575a" stroke-width="1.1" stroke-linejoin="round"/>
<path d="M999.0 300.0 L980.0 310.0" fill="none" stroke="#57575a" stroke-width="1.1" stroke-linejoin="round"/>
<path d="M950.0 388.0 C953.3 386.7 961.8 380.5 970.0 380.0 C978.2 379.5 994.2 384.2 999.0 385.0" fill="none" stroke="#57575a" stroke-width="1.1" stroke-linejoin="round"/>
<path d="M915.0 132.0 C917.5 133.3 922.5 138.3 930.0 140.0 C937.5 141.7 948.5 141.0 960.0 142.0 C971.5 143.0 992.5 145.3 999.0 146.0" fill="none" stroke="#57575a" stroke-width="1.1" stroke-linejoin="round"/>
<path d="M895.0 120.0 C895.8 122.5 900.3 130.3 900.0 135.0 C899.7 139.7 894.2 145.8 893.0 148.0" fill="none" stroke="#57575a" stroke-width="1.1" stroke-linejoin="round"/>
<path d="M960.0 128.0 L965.0 147.0" fill="none" stroke="#57575a" stroke-width="1.1" stroke-linejoin="round"/>
<path d="M915.0 100.0 L918.0 132.0" fill="none" stroke="#57575a" stroke-width="1.1" stroke-linejoin="round"/>
<path d="M950.0 88.0 L952.0 126.0" fill="none" stroke="#57575a" stroke-width="1.1" stroke-linejoin="round"/>
<path d="M980.0 74.0 L982.0 130.0" fill="none" stroke="#57575a" stroke-width="1.1" stroke-linejoin="round"/>
<path d="M867.0 130.0 L880.0 122.0" fill="none" stroke="#57575a" stroke-width="1.1" stroke-linejoin="round"/>
<path d="M852.0 150.0 L870.0 158.0" fill="none" stroke="#57575a" stroke-width="1.1" stroke-linejoin="round"/>
<path d="M659.0 20.0 C662.5 18.3 673.2 13.3 680.0 10.0 C686.8 6.7 696.7 1.7 700.0 0.0" fill="none" stroke="#57575a" stroke-width="1.1" stroke-linejoin="round"/>
<path d="M708.0 22.0 C711.7 20.3 723.0 15.0 730.0 12.0 C737.0 9.0 746.7 5.3 750.0 4.0" fill="none" stroke="#57575a" stroke-width="1.1" stroke-linejoin="round"/>
<path d="M713.0 24.0 L700.0 34.0" fill="none" stroke="#57575a" stroke-width="1.1" stroke-linejoin="round"/>
<path d="M740.0 37.0 C740.8 34.2 741.7 24.5 745.0 20.0 C748.3 15.5 757.5 11.7 760.0 10.0" fill="none" stroke="#57575a" stroke-width="1.1" stroke-linejoin="round"/>
<path d="M765.0 52.0 C769.2 50.0 782.5 43.7 790.0 40.0 C797.5 36.3 806.7 31.7 810.0 30.0" fill="none" stroke="#57575a" stroke-width="1.1" stroke-linejoin="round"/>
<path d="M778.0 26.0 C781.7 25.0 793.8 23.0 800.0 20.0 C806.2 17.0 812.5 10.0 815.0 8.0" fill="none" stroke="#57575a" stroke-width="1.1" stroke-linejoin="round"/>
<path d="M756.0 72.0 C760.0 71.0 772.7 66.3 780.0 66.0 C787.3 65.7 796.7 69.3 800.0 70.0" fill="none" stroke="#57575a" stroke-width="1.1" stroke-linejoin="round"/>
<path d="M787.0 101.0 C787.5 97.5 787.8 85.2 790.0 80.0 C792.2 74.8 795.8 72.3 800.0 70.0 C804.2 67.7 812.5 66.7 815.0 66.0" fill="none" stroke="#57575a" stroke-width="1.1" stroke-linejoin="round"/>
<path d="M700.0 66.0 L702.0 91.0" fill="none" stroke="#57575a" stroke-width="1.1" stroke-linejoin="round"/>
<path d="M720.0 76.0 L722.0 91.0" fill="none" stroke="#57575a" stroke-width="1.1" stroke-linejoin="round"/>
<path d="M659.0 70.0 C661.5 70.0 667.2 70.7 674.0 70.0 C680.8 69.3 695.7 66.7 700.0 66.0" fill="none" stroke="#57575a" stroke-width="1.1" stroke-linejoin="round"/>
<path d="M659.0 110.0 L712.0 110.0" fill="none" stroke="#57575a" stroke-width="1.1" stroke-linejoin="round"/>
<path d="M747.0 110.0 L785.0 112.0" fill="none" stroke="#57575a" stroke-width="1.1" stroke-linejoin="round"/>
<path d="M459.0 8.0 C454.2 8.3 439.2 9.3 430.0 10.0 C420.8 10.7 408.3 11.7 404.0 12.0" fill="none" stroke="#57575a" stroke-width="1.1" stroke-linejoin="round"/>
<path d="M335.0 45.0 C339.2 44.8 348.5 44.2 360.0 44.0 C371.5 43.8 396.7 44.0 404.0 44.0" fill="none" stroke="#57575a" stroke-width="1.1" stroke-linejoin="round"/>
<path d="M343.0 30.0 L343.0 60.0" fill="none" stroke="#57575a" stroke-width="1.1" stroke-linejoin="round"/>
<path d="M300.0 17.0 C300.3 20.8 300.3 33.5 302.0 40.0 C303.7 46.5 308.7 53.3 310.0 56.0" fill="none" stroke="#57575a" stroke-width="1.1" stroke-linejoin="round"/>
<path d="M359.0 23.0 L360.0 64.0" fill="none" stroke="#57575a" stroke-width="1.1" stroke-linejoin="round"/>
<path d="M390.0 24.0 L394.0 50.0" fill="none" stroke="#57575a" stroke-width="1.1" stroke-linejoin="round"/>
<path d="M417.0 35.0 L418.0 63.0" fill="none" stroke="#57575a" stroke-width="1.1" stroke-linejoin="round"/>
<path d="M447.0 24.0 L446.0 60.0" fill="none" stroke="#57575a" stroke-width="1.1" stroke-linejoin="round"/></g>
<rect x="713" y="144" width="12" height="6.5" fill="#48484a" stroke="#606062" stroke-width="1"/>
<g font-family="Liberation Sans, sans-serif"><text x="291" y="146.6" font-size="11" fill="#cccccc" text-anchor="start" letter-spacing="0">Arlington</text>
<text x="509" y="148.8" font-size="12.5" fill="#e2e2e2" text-anchor="start" letter-spacing="0">Washington</text>
<text x="698" y="226" font-size="8.7" fill="#cfcfcf" text-anchor="middle" letter-spacing="0">Washington</text>
<text x="698" y="235.2" font-size="8.7" fill="#cfcfcf" text-anchor="middle" letter-spacing="0.3">Navy Yard</text>
<text x="871" y="422.3" font-size="8.95" fill="#c8c8c8" text-anchor="start" letter-spacing="0">Marlow Heights</text>
<text x="316.8" y="397.8" font-size="8.5" fill="#909090" text-anchor="start" letter-spacing="0.1" transform="rotate(-2.5 316.8 397.8)">Four Mile Run</text>
<text x="360.8" y="367.5" font-size="8.6" fill="#878787" text-anchor="start" letter-spacing="0.35" transform="rotate(-76.5 360.8 367.5)">Long Branch</text>
<text x="402" y="166" font-size="8" fill="#7e7e7e" text-anchor="start" letter-spacing="0.4" transform="rotate(63 402 166)">VIRGINIA</text>
<text x="562.5 566.8 569.3 571.6 574.0 575.1 577.4 579.6 580.7 582.6 584.4 585.2 587.0 588.1 589.1 589.7 590.1 590.5" y="208.5 216.2 220.8 225.1 229.8 231.8 236.6 241.4 244.0 248.9 254.0 256.6 263.2 268.4 273.6 278.8 284.1 289.4" rotate="61 61 62 62 63 64 66 67 68 71 73 75 77 80 83 86 87 87" font-size="9" fill="#a2a2a2">Washington Channel</text>
<text x="804.5" y="380.5" font-size="8.1" fill="#8c8c8c" text-anchor="start" letter-spacing="0.55" transform="rotate(-43.6 804.5 380.5)">DISTRICT OF COLUMBIA</text>
<text x="835" y="369" font-size="8.1" fill="#8c8c8c" text-anchor="start" letter-spacing="0.05" transform="rotate(-43.6 835 369)">MARYLAND</text>
<text x="896" y="310.5" font-size="8.8" fill="#939393" text-anchor="start" letter-spacing="0.3" transform="rotate(-25 896 310.5)">Oxon Run</text>
<text x="940" y="3" font-size="9" fill="#858585" text-anchor="start" letter-spacing="0.6" transform="rotate(9 940 3)">Beaverdam Creek</text>
<text x="309.3" y="398" font-size="7.5" fill="#858585" text-anchor="start" letter-spacing="0.3" transform="rotate(90 309.3 398)">Arlington</text></g>
  </svg>
  <div class="mb" style="left:680px;top:10px;width:23px;height:23px"><svg width="23" height="23" viewBox="0 0 23 23"><g fill="#cdeefd"><circle cx="5.6" cy="7" r="1.5"/><circle cx="5.6" cy="11.2" r="1.5"/><circle cx="5.6" cy="15.4" r="1.5"/><rect x="8.3" y="6" width="10.8" height="2"/><rect x="8.3" y="10.2" width="10.8" height="2"/><rect x="8.3" y="14.4" width="10.8" height="2"/></g></svg></div>
  <div class="mb" style="left:707px;top:10px;width:23px;height:23px"><svg width="23" height="23" viewBox="0 0 23 23"><path d="M6.6 5.7 H13 L17 9.5 V17.9 H6.6 Z" fill="none" stroke="#a6cfe8" stroke-width="1.2" stroke-linejoin="round"/><path d="M13 5.7 V9.5 H17" fill="none" stroke="#a6cfe8" stroke-width="1"/><rect x="8.3" y="11.6" width="3" height="2" fill="#7fa9c4"/><path d="M12 12.6 H15.3 M8.3 15 H15.3 M8.3 16.4 H15.3" stroke="#7fa9c4" stroke-width="0.9"/></svg></div>
  <div class="mb" style="left:707px;top:155px;width:23px;height:46px"><svg width="23" height="46" viewBox="0 0 23 46"><path d="M6 11.5 H16.2 M11.1 6.4 V16.6 M6 34.2 H16.2" stroke="#e6f3fb" stroke-width="1.25" fill="none"/></svg></div>
  <div class="mb" style="left:707px;top:207px;width:23px;height:45.5px"><div style="position:absolute;left:0;top:0;width:23px;height:22.5px;background:#114b70;color:#4fb2f0;font-size:10.6px;line-height:23px;text-align:center">2D</div><div style="position:absolute;left:0;top:22.5px;width:23px;height:23px;color:#e6f3fb;font-size:10.6px;line-height:24px;text-align:center;text-shadow:0.3px 0 0 #e6f3fb">3D</div></div>
</div>
<div id="bottom">
  <div id="search"><div class="t">Find address or place</div><div class="d" style="left:232.5px"></div><div class="d" style="left:255.5px"></div>
    <svg style="position:absolute;left:237.6px;top:4.7px" width="13" height="13" viewBox="0 0 13 13"><circle cx="5" cy="5" r="3.4" fill="none" stroke="#fff" stroke-width="1.4"/><path d="M7.5 7.5 L11.3 11.3" stroke="#fff" stroke-width="1.7" stroke-linecap="round"/></svg>
    <svg style="position:absolute;left:262px;top:3px" width="12" height="16" viewBox="0 0 12 16"><path d="M6 0.5 C2.9 0.5 0.8 2.8 0.8 5.6 C0.8 9.2 6 15 6 15 C6 15 11.2 9.2 11.2 5.6 C11.2 2.8 9.1 0.5 6 0.5 Z" fill="#fff"/><circle cx="6" cy="5.6" r="2" fill="#0079c1"/></svg>
  </div>
  <div class="card" style="left:58px;top:50px;width:277.6px;height:169.5px">
    <div class="h" style="left:12px;top:10px;letter-spacing:0.06px"><b>93</b> Underutilized Business Zones</div>
    <table class="z">
      <tr><td style="width:137.3px">Hells Bottom</td><td style="width:108.5px">Population <b>6,756</b></td></tr>
      <tr><td>Northwest Rectangle</td><td>Population <b>6,408</b></td></tr>
      <tr><td>Lewis Subdivision</td><td>Population <b>5,973</b></td></tr>
      <tr><td>Barnaby Woods</td><td>Population <b>5,911</b></td></tr>
      <tr><td>Varnum</td><td>Population <b>5,797</b></td></tr>
      <tr><td>Barry Farm</td><td>Population <b>5,702</b></td></tr>
    </table>
    <div class="sb" style="left:271px;top:1.3px;width:3px;height:8.5px"></div>
  </div>
  <div class="card" style="left:350px;top:18px;width:275.5px;height:201.5px">
    <div class="h" style="left:11.3px;top:9.2px;letter-spacing:0.1px"><b>11</b> Incentive Zones</div>
    <svg class="info" style="left:244px;top:11px" viewBox="0 0 13 13"><circle cx="6.5" cy="6.5" r="6.3" fill="#8c8c8c"/><circle cx="6.3" cy="3.4" r="1.2" fill="#fff"/><path d="M4.6 5.4 H7.4 V9.3 H8.3 V10.5 H4.6 V9.3 H5.5 V6.6 H4.6 Z" fill="#fff"/></svg>
    <div class="lst">NoMa BID<br>Mount Vernon Triangle CID<br>Downtown BID<br>Golden Triangle BID<br>Georgetown BID<br>Adams Morgan BID<br>Dupont Circle BID<br>Capitol Riverfront BID<br>Southwest BID<br>Capitol Hill BID<br>Anacostia BID</div>
    <div class="sb" style="left:270px;top:1px;width:3px;height:186.5px"></div>
  </div>
  <div class="card" style="left:640px;top:18px;width:277px;height:201.5px">
    <div class="h" style="left:12.3px;top:9.2px;letter-spacing:0.05px"><b>14</b> Potential Developments</div>
    <svg class="info" style="left:245px;top:11px" viewBox="0 0 13 13"><circle cx="6.5" cy="6.5" r="6.3" fill="#8c8c8c"/><circle cx="6.3" cy="3.4" r="1.2" fill="#fff"/><path d="M4.6 5.4 H7.4 V9.3 H8.3 V10.5 H4.6 V9.3 H5.5 V6.6 H4.6 Z" fill="#fff"/></svg>
    <div class="dv" style="top:32.3px"><div class="im"><svg width="66" height="45" viewBox="0 0 66 44" preserveAspectRatio="none"><defs><linearGradient id="g1" x1="0" y1="0" x2="0" y2="1"><stop offset="0" stop-color="#d6e2e0"/><stop offset="0.07" stop-color="#9db8a8"/><stop offset="0.12" stop-color="#4a7050"/><stop offset="0.3" stop-color="#64803e"/><stop offset="1" stop-color="#587a34"/></linearGradient></defs>
<rect width="66" height="44" fill="url(#g1)"/>
<g fill="#b08a5e"><path d="M20 9 L34 8 L40 12 L26 14Z"/><path d="M36 10 L52 9 L58 14 L44 16Z"/><path d="M6 17 L20 15 L30 20 L14 23Z" fill="#a8714c"/><path d="M28 17 L42 16 L50 21 L36 24Z" fill="#c4b08a"/><path d="M48 17 L62 18 L66 24 L54 24Z" fill="#b8a070"/><path d="M0 22 L10 21 L18 27 L6 30Z" fill="#9a6444"/><path d="M18 27 L30 30 L44 38 L40 41 L16 31Z" fill="#a87858"/><path d="M2 31 L14 34 L30 42 L26 44 L0 36Z" fill="#96603e"/><path d="M52 30 L66 28 L66 38 L56 38Z" fill="#a66c44"/><path d="M44 24 L54 26 L56 32 L46 31Z" fill="#c8b890"/></g>
<g fill="#3c6b2a"><ellipse cx="12" cy="28" rx="6" ry="2.5"/><ellipse cx="36" cy="28" rx="7" ry="2.5"/><ellipse cx="50" cy="40" rx="9" ry="3"/><ellipse cx="8" cy="41" rx="7" ry="2.5"/><ellipse cx="24" cy="13" rx="5" ry="1.6"/><ellipse cx="58" cy="12" rx="6" ry="2"/></g>
<g fill="#b89468"><path d="M2 12 L12 11 L16 14 L6 15Z"/><path d="M44 5.5 L58 5 L62 8 L48 9Z" fill="#a89a78"/><path d="M14 8 L24 7.4 L27 9.6 L17 10.4Z" fill="#9c8a6a"/><path d="M30 24 L40 26 L42 30 L32 28Z" fill="#d0c49c"/><path d="M56 24 L66 25 L66 29 L58 28Z" fill="#c09060"/><path d="M30 33 L40 36 L38 39 L28 36Z" fill="#b88460"/><path d="M44 33 L56 34 L58 38 L46 37Z" fill="#8c9a5c"/><path d="M0 14 L6 13.4 L8 16 L0 17Z" fill="#a8744c"/></g>
<g fill="#4f7c34"><ellipse cx="30" cy="15" rx="3" ry="1"/><ellipse cx="46" cy="22" rx="3" ry="1.2"/><ellipse cx="22" cy="25" rx="3" ry="1.2"/><ellipse cx="60" cy="31" rx="3" ry="1.2"/></g>
<rect x="41.5" y="26" width="0.9" height="8" fill="#e8e8e0"/></svg></div><div class="tt" style="top:5.7px">The Parks at Walter Reed</div><div class="st" style="top:20.8px">6800 Georgia Avenue NW</div></div>
    <div class="dv" style="top:84.6px"><div class="im"><svg width="66" height="45" viewBox="0 0 66 44" preserveAspectRatio="none"><defs><linearGradient id="g2" x1="0" y1="0" x2="0.3" y2="1"><stop offset="0" stop-color="#1f62c8"/><stop offset="0.55" stop-color="#5b9be6"/><stop offset="0.85" stop-color="#b8d4f0"/><stop offset="1" stop-color="#c8d8e8"/></linearGradient></defs>
<rect width="66" height="44" fill="url(#g2)"/>
<path d="M52 12 L66 8 L66 16 L54 17Z" fill="#d8dce4" opacity="0.8"/><path d="M48 20 L62 18 L60 21Z" fill="#8c9cb0" opacity="0.7"/>
<path d="M4 7 L21 13 L21 36 L4 37Z" fill="#b4c4d8"/><path d="M4 7 L12 10 L12 36.5 L4 37Z" fill="#8fb0d8"/>
<path d="M21 15 L33 12.5 L33 35 L21 36Z" fill="#7f98b8"/><g stroke="#dfe8f2" stroke-width="0.7" opacity="0.8"><path d="M4 11 L21 16 M4 15 L21 19.4 M4 19 L21 22.8 M4 23 L21 26.2 M4 27 L21 29.6 M4 31 L21 33"/><path d="M44 23 L58 27 M44 26 L58 29 M44 29 L58 31"/></g><path d="M33 17 L44 19 L44 34 L33 35Z" fill="#c8c4b0"/><path d="M36 17.5 L38 17.9 L38 34.5 L36 34.7Z" fill="#d8b850"/>
<path d="M44 20 L58 25 L58 33.5 L44 34Z" fill="#b0bccc"/><path d="M58 27 L66 29 L66 33.5 L58 33.5Z" fill="#9aa8b8"/>
<path d="M0 36 L66 33 L66 44 L0 44Z" fill="#4a5058"/><path d="M0 40.5 L66 38.5 L66 44 L0 44Z" fill="#8a9098"/><path d="M44 39 L66 37.5 L66 41 L46 42Z" fill="#5a9a3c"/>
<path d="M0 24 L4 23 L4 37 L0 37.5Z" fill="#3f6a3a"/><ellipse cx="21.5" cy="32.5" rx="2.3" ry="3" fill="#3f7a3c"/><ellipse cx="33" cy="32" rx="2" ry="2.6" fill="#3f7a3c"/><ellipse cx="42" cy="32" rx="1.8" ry="2.4" fill="#3f7a3c"/><ellipse cx="52" cy="32.5" rx="1.6" ry="2" fill="#3f7a3c"/></svg></div><div class="tt" style="top:5.7px">ART Place at Fort Totten</div><div class="st" style="top:20.8px">5180 South Dakota Avenue NE</div></div>
    <div class="dv" style="top:137px"><div class="im"><svg width="66" height="45" viewBox="0 0 66 44" preserveAspectRatio="none"><defs><linearGradient id="g3" x1="0" y1="0" x2="0" y2="1"><stop offset="0" stop-color="#3472c8"/><stop offset="0.25" stop-color="#7fb0e4"/><stop offset="0.42" stop-color="#dce8f4"/><stop offset="0.43" stop-color="#5f9040"/><stop offset="1" stop-color="#4f8838"/></linearGradient></defs>
<rect width="66" height="44" fill="url(#g3)"/>
<g fill="#f4f8fc" opacity="0.9"><ellipse cx="24" cy="7" rx="8" ry="2.6"/><ellipse cx="34" cy="5.6" rx="5" ry="1.6"/><ellipse cx="22" cy="11" rx="9" ry="2"/><ellipse cx="5" cy="6" rx="5" ry="1.8"/><ellipse cx="56" cy="13" rx="7" ry="1.8"/><ellipse cx="14" cy="3.5" rx="3" ry="1.4"/></g>
<path d="M10 16 L26 15 L27 14 L33 14 L34 15 L50 15.5 L60 15 L60 21 L10 21Z" fill="#b89c7c"/><path d="M26 14.5 L34 14.5 L34 21 L26 21Z" fill="#a08460"/><path d="M50 15.5 L58 15 L58 21 L50 21Z" fill="#b06c4c"/>
<path d="M12 19 L56 19 L60 24 L8 24Z" fill="#4d8838"/>
<path d="M22 27 L46 26 L52 33 L50 40 L32 42 L24 38Z" fill="#cdc6bc"/><ellipse cx="37" cy="30" rx="5" ry="1.8" fill="#a8c4e0"/>
<path d="M6 24 L13 24 L26 40 L18 44 L6 44Z" fill="#5a5c60"/><path d="M0 24 L6 24 L10 44 L0 44Z" fill="#8a9088"/><path d="M51 25 L58 25 L66 33 L66 44 L54 44 L53 36Z" fill="#5c5e62"/>
<path d="M22 42 L52 41 L54 44 L20 44Z" fill="#3f7a2c"/><ellipse cx="4" cy="24" rx="4" ry="3.4" fill="#3f7a30"/><ellipse cx="61" cy="24" rx="5" ry="3.6" fill="#3f7a30"/><ellipse cx="18" cy="23" rx="4.6" ry="2.6" fill="#3f7a30"/><ellipse cx="48" cy="23" rx="3" ry="2.6" fill="#3f7a30"/></svg></div><div class="tt" style="top:-1.5px">RIA</div><div class="st" style="top:13px">Rhode Island Ave. 14th St. &amp;<br>Montana Ave. NE</div></div>
    <div class="dv" style="top:189.3px"><div class="im"><svg width="66" height="45" viewBox="0 0 66 44" preserveAspectRatio="none"><defs><linearGradient id="g4" x1="0" y1="0" x2="0" y2="1"><stop offset="0" stop-color="#2f4c78"/><stop offset="0.06" stop-color="#6a7090"/><stop offset="0.12" stop-color="#c89484"/><stop offset="0.19" stop-color="#b8a09c"/><stop offset="0.22" stop-color="#2c3c2c"/><stop offset="1" stop-color="#26342a"/></linearGradient></defs><rect width="66" height="44" fill="url(#g4)"/><rect x="6" y="9.3" width="10" height="1.2" fill="#b8a8d8" opacity="0.8"/><rect x="22" y="10.4" width="30" height="1" fill="#7088b0" opacity="0.7"/><rect x="54" y="9.5" width="11" height="1.4" fill="#b090c8" opacity="0.8"/></svg></div><div class="tt" style="top:5.7px">Bryant Street</div><div class="st" style="top:20.8px">680 Rhode Island Avenue NE</div></div>
    <div class="sb" style="left:271px;top:1px;width:3px;height:47px"></div>
  </div>
</div>
  <div style="position:absolute;left:813px;top:408.8px;width:37px;height:16.3px;z-index:5;background:#ecf0f3;box-sizing:border-box;border:1px solid #fff;border-bottom:none;box-shadow:0 0 2px rgba(0,0,0,0.5);clip-path:inset(-3px -3px 0 -3px);will-change:transform"><svg style="position:absolute;left:-1px;top:-1px" width="37" height="16" viewBox="0 0 37 16"><path d="M9.6 3.9 L17.6 11.5 L25.6 3.9" fill="none" stroke="#1478c4" stroke-width="1.8"/></svg></div>
</body>
</html>
